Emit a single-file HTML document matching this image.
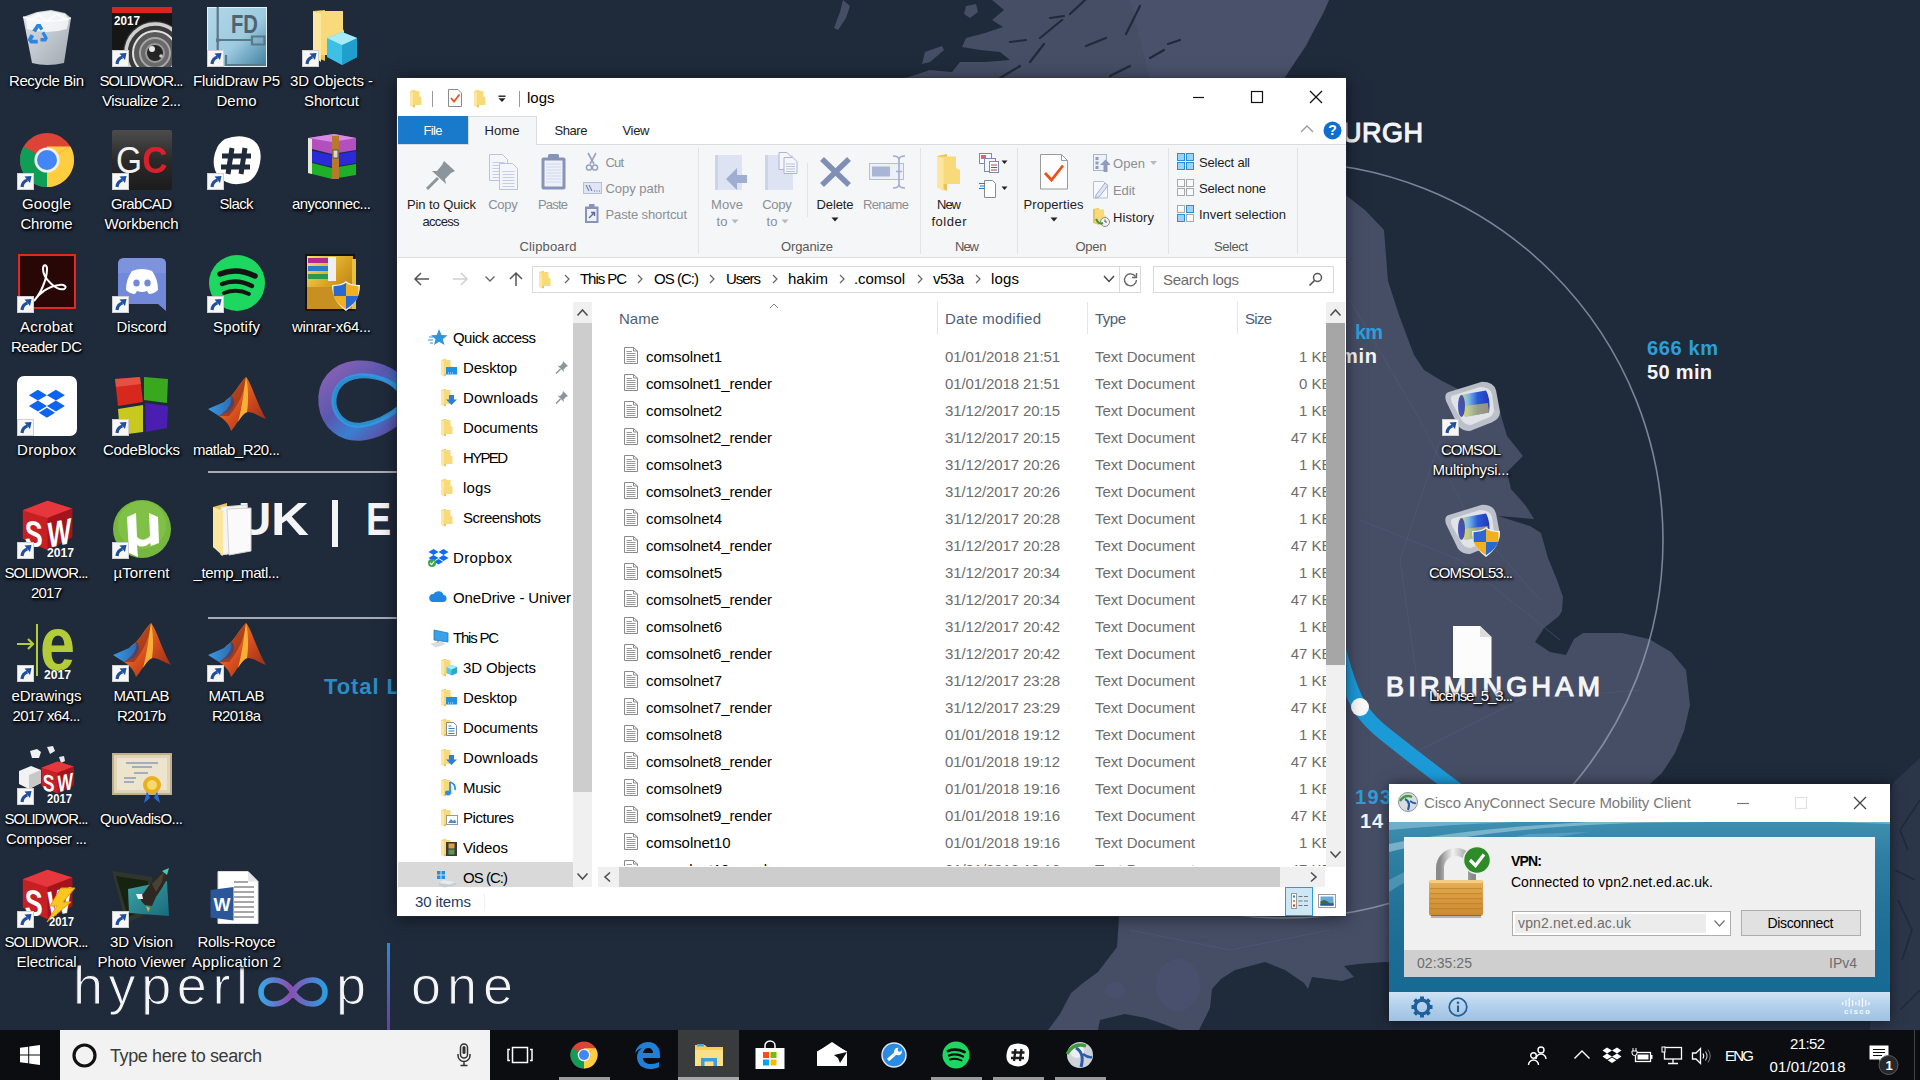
<!DOCTYPE html>
<html><head><meta charset="utf-8"><title>desktop</title><style>
html,body{margin:0;padding:0;}
body{width:1920px;height:1080px;overflow:hidden;position:relative;background:#1f2a3b;font-family:"Liberation Sans",sans-serif;}
.b{position:absolute;display:block;box-sizing:border-box;}
.t{position:absolute;white-space:pre;display:block;}
.lbl{text-shadow:1px 1px 2px #000,0 0 3px rgba(0,0,0,.9),1px 2px 3px rgba(0,0,0,.7);}
</style></head><body>
<svg class="b" style="left:0px;top:0px;" width="1920" height="1080" viewBox="0 0 1920 1080"><polygon points="992,0 1004,10 992,20 1003,27 985,33 966,38 962,47 980,50 1000,52 1010,60 985,62 960,62 952,72 930,70 912,76 896,80 1283,80 1295,62 1306,46 1314,30 1323,14 1329,0" fill="#464e66"/><polygon points="843,0 850,6 846,18 838,30 834,28 840,12" fill="#464e66"/><polygon points="925,52 942,46 944,50 930,62 922,64" fill="#464e66"/><polygon points="966,6 976,4 978,12 970,18 964,14" fill="#464e66"/><polygon points="1100,80 1340,80 1340,190 1347,196 1366,211 1384,230 1388,281 1399,315 1414,355 1424,370 1442,381 1476,398 1500,412 1507,436 1523,456 1507,472 1511,489 1526,506 1534,519 1498,516 1530,526 1541,533 1548,558 1557,580 1563,597 1562,611 1559,616 1544,628 1535,642 1550,652 1566,655 1574,639 1583,633 1622,633 1649,639 1671,652 1686,670 1690,705 1684,731 1675,753 1662,773 1651,783 1636,795 1620,830 1640,860 1660,900 1640,940 1600,960 1500,965 1385,962 1358,964 1344,966 1354,977 1342,981 1312,977 1308,989 1304,983 1285,970 1265,962 1235,970 1221,979 1212,989 1210,1008 1199,1030 1179,1030 1158,1022 1146,1018 1125,1014 1100,1020 1098,1030 1048,1030 1060,1014 1071,993 1083,983 1098,972 1117,947 1119,917 1100,900" fill="#464e66"/><polygon points="1920,758 1905,772 1894,782 1888,800 1880,830 1870,1030 1920,1030" fill="#2c3649"/><polygon points="1130,0 1329,0 1314,30 1295,62 1283,80 1150,80 1140,40" fill="#4b546d" opacity=".7"/><g stroke="#1f2a3b" stroke-width="2.2" fill="none" stroke-linecap="round"><path d="M1085,0 L1070,14 M1140,6 L1126,34 M1062,20 L1040,38 M1050,18 L1064,16 M1106,38 L1086,46 M1044,44 L1030,62 M1010,42 L1026,40 M1164,50 L1150,58 M1180,40 L1168,44 M1020,66 L1000,78 M1130,66 L1110,76"/></g><g stroke="#1f2a3b" stroke-width="1.6" fill="none"><path d="M1920,800 L1900,830 L1908,850 M1895,870 L1915,880 M1898,900 L1912,930 L1902,960 M1920,990 L1900,1010"/></g><g stroke="#525b74" stroke-width="1" fill="none" opacity=".6"><path d="M1350,300 L1420,420 L1470,520 L1540,600 M1360,520 L1460,560 L1560,640 M1400,760 L1520,700 L1640,690 M1440,440 L1400,560 L1420,700 M1130,930 L1230,950 L1330,930"/></g><g fill="#4a5270" opacity=".7"><ellipse cx="1178" cy="985" rx="22" ry="26"/><ellipse cx="1115" cy="990" rx="10" ry="8"/></g><circle cx="1285" cy="540" r="378" fill="none" stroke="#9aa3b5" stroke-opacity=".75" stroke-width="1.6"/><path d="M1336,638 C1342,664 1350,690 1360,708 C1368,720 1377,728 1386,735 L1414,757 L1444,780 L1540,852" fill="none" stroke="#1c9ad8" stroke-width="14.500" stroke-linejoin="round"/><circle cx="1360" cy="707" r="9" fill="#fbfbfb"/><rect x="208" y="471" width="190" height="2" fill="#c9ccd4" opacity=".8"/><rect x="208" y="617" width="190" height="2" fill="#c9ccd4" opacity=".8"/><defs><linearGradient id="rg" x1="0" y1="0" x2="1" y2="1"><stop offset="0" stop-color="#8a62b4"/><stop offset=".4" stop-color="#5a58b0"/><stop offset=".65" stop-color="#3a7fd0"/><stop offset="1" stop-color="#6a3f9a"/></linearGradient><linearGradient id="inf" x1="0" y1="0" x2="1" y2="0"><stop offset="0" stop-color="#3aa6e6"/><stop offset=".45" stop-color="#8a4fb0"/><stop offset="1" stop-color="#2f9be0"/></linearGradient><linearGradient id="vb" x1="0" y1="0" x2="0" y2="1"><stop offset="0" stop-color="#2b8bd6"/><stop offset="1" stop-color="#6a3fa0"/></linearGradient></defs><path d="M402,386 C390,373 373,367 357,368 C336,370 324,384 326,404 C328,423 343,435 362,433 C380,431 393,421 402,412" fill="none" stroke="url(#rg)" stroke-width="15"/><path d="M402,391 C390,380 374,375 359,376 C342,378 333,389 334,404 C336,418 348,427 362,425 C378,423 392,414 402,406" fill="none" stroke="#2f9fe6" stroke-width="5" opacity=".85"/><path d="M293,992 C283,975 261,977 261,992 C261,1007 283,1009 293,992 C303,975 325,977 325,992 C325,1007 303,1009 293,992 Z" fill="none" stroke="url(#inf)" stroke-width="5.500"/><rect x="387" y="943" width="3" height="87" fill="url(#vb)"/></svg>
<span class="t" style="left:1342.00px;top:117.00px;font-size:27px;line-height:32px;color:#f4f5f7;letter-spacing:0.501px;-webkit-text-stroke:1.1px #f4f5f7;">URGH</span>
<span class="t" style="left:1355.00px;top:320.00px;font-size:20px;line-height:24px;color:#2c9fdb;letter-spacing:-0.906px;font-weight:bold;">km</span>
<span class="t" style="left:1340.00px;top:344.00px;font-size:20px;line-height:24px;color:#f4f5f7;letter-spacing:0.722px;font-weight:bold;">min</span>
<span class="t" style="left:1647.00px;top:336.00px;font-size:20px;line-height:24px;color:#2c9fdb;letter-spacing:0.633px;font-weight:bold;">666 km</span>
<span class="t" style="left:1647.00px;top:360.00px;font-size:20px;line-height:24px;color:#f4f5f7;letter-spacing:0.328px;font-weight:bold;">50 min</span>
<span class="t" style="left:1386.00px;top:671.00px;font-size:27px;line-height:32px;color:#f4f5f7;letter-spacing:4.277px;-webkit-text-stroke:1.2px #f4f5f7;">BIRMINGHAM</span>
<span class="t" style="left:1355.00px;top:785.00px;font-size:20px;line-height:24px;color:#2c9fdb;letter-spacing:1.315px;font-weight:bold;">193</span>
<span class="t" style="left:1360.00px;top:809.00px;font-size:20px;line-height:24px;color:#f4f5f7;letter-spacing:0.753px;font-weight:bold;">14</span>
<span class="t" style="left:238.00px;top:491.90px;font-size:46px;line-height:55px;color:#f4f5f7;font-weight:bold;">U</span>
<span class="t" style="left:270.50px;top:491.90px;font-size:46px;line-height:55px;color:#f4f5f7;font-weight:bold;transform:scaleX(1.14);transform-origin:0 0;">K</span>
<div class="b" style="left:332px;top:499.5px;width:5.5px;height:47px;background:#f4f5f7;"></div>
<span class="t" style="left:365.50px;top:491.90px;font-size:46px;line-height:55px;color:#f4f5f7;font-weight:bold;transform:scaleX(.82);transform-origin:0 0;">E</span>
<span class="t" style="left:324.00px;top:674.00px;font-size:22px;line-height:26px;color:#2b8cc6;letter-spacing:0.922px;font-weight:bold;">Total L</span>
<span class="t" style="left:73.00px;top:952.50px;font-size:54px;line-height:65px;color:#f4f5f7;letter-spacing:5.583px;-webkit-text-stroke:1.1px #1f2a3b;">hyperl</span>
<span class="t" style="left:336.00px;top:952.50px;font-size:54px;line-height:65px;color:#f4f5f7;-webkit-text-stroke:1.1px #1f2a3b;">p</span>
<span class="t" style="left:411.00px;top:952.50px;font-size:54px;line-height:65px;color:#f4f5f7;letter-spacing:5.950px;-webkit-text-stroke:1.1px #1f2a3b;">one</span>
<svg class="b" style="left:17px;top:7px;" width="60" height="60" viewBox="0 0 60 60"><defs><linearGradient id="rb1" x1="0" y1="0" x2="1" y2="1"><stop offset="0" stop-color="#f4f6f8"/><stop offset=".5" stop-color="#cfd5db"/><stop offset="1" stop-color="#aab2ba"/></linearGradient></defs><path d="M6,10 L20,5 L34,3 L48,6 L54,11 L47,56 Q30,60 15,56 Z" fill="url(#rb1)" opacity=".92"/><path d="M6,10 Q30,18 54,11" fill="none" stroke="#fff" stroke-width="1.500" opacity=".8"/><path d="M12,14 L22,8 L30,14 L40,7 L50,13" fill="none" stroke="#fff" stroke-width="2" opacity=".7"/><path d="M9,11 L20,6 L34,4 L48,7 L52,12 L50,22 Q30,28 10,22 Z" fill="#fff" opacity=".75"/><g fill="#2a86e0" transform="translate(-5,-5) scale(.92)"><path d="M22,31 L27,24 L31,24 L34,29 L31,31 L29,28 L26,33 Z"/><path d="M35,32 L39,39 L37,43 L31,43 L31,39 L35,39 L32,34 Z"/><path d="M28,45 L20,45 L17,41 L20,35 L24,37 L22,41 L28,41 Z"/></g></svg>
<span class="t lbl" style="left:9.00px;top:71.90px;font-size:15px;line-height:18px;color:#fff;letter-spacing:-0.420px;">Recycle Bin</span>
<svg class="b" style="left:112px;top:7px;" width="60" height="60" viewBox="0 0 60 60"><rect width="60" height="60" fill="#161616"/><rect width="60" height="6" fill="#d8251f"/><circle cx="43" cy="46" r="32" fill="#3a3a3a"/><circle cx="43" cy="46" r="29" fill="none" stroke="#d0d0d0" stroke-width="3.500"/><circle cx="43" cy="46" r="22" fill="#5a5a5a" stroke="#e0e0e0" stroke-width="2"/><circle cx="43" cy="46" r="15" fill="#6a6a6a" stroke="#a8a8a8" stroke-width="2"/><circle cx="43" cy="46" r="9" fill="#242424" stroke="#9a9a9a" stroke-width="2"/><circle cx="40" cy="42" r="3" fill="#e8e8e8"/><circle cx="49" cy="49" r="1.800" fill="#c8c8c8"/><text x="2" y="17.500" font-family="Liberation Sans" font-weight="bold" font-size="12.5" fill="#fff" textLength="26" lengthAdjust="spacingAndGlyphs">2017</text><g transform="translate(0,43)"><rect x="0.500" y="0.500" width="16" height="16" fill="#f7f7f7" stroke="#d0d0d0"/><path d="M5,14 Q5.500,8.500 10.500,7" stroke="#1f4f9e" stroke-width="3.200" fill="none"/><path d="M7.500,3.500 L14.500,3 L13,10 Z" fill="#1f4f9e"/></g></svg>
<span class="t lbl" style="left:99.50px;top:71.90px;font-size:15px;line-height:18px;color:#fff;letter-spacing:-1.017px;">SOLIDWOR...</span>
<span class="t lbl" style="left:102.00px;top:92.10px;font-size:15px;line-height:18px;color:#fff;letter-spacing:-0.444px;">Visualize 2...</span>
<svg class="b" style="left:207px;top:7px;" width="60" height="60" viewBox="0 0 60 60"><defs><linearGradient id="fd3" x1="0" y1="0" x2="1" y2="1"><stop offset="0" stop-color="#b4d6e8"/><stop offset=".55" stop-color="#9ccbe0"/><stop offset="1" stop-color="#3f7f9f"/></linearGradient></defs><rect x="0.500" y="0.500" width="59" height="59" fill="url(#fd3)" stroke="#e8f0f4"/><path d="M10.700,0 V60 M10.700,33 H45 M45,29.500 h12.500 v8 h-12.500 Z M19,48 v10 h38" fill="none" stroke="#5a7888" stroke-width="2.200"/><rect x="9" y="31.500" width="3.500" height="3.500" fill="#5a7888"/><text x="24" y="26.300" font-family="Liberation Sans" font-weight="bold" font-size="26" fill="#4f6270" textLength="27" lengthAdjust="spacingAndGlyphs">FD</text><g transform="translate(0,43)"><rect x="0.500" y="0.500" width="16" height="16" fill="#f7f7f7" stroke="#d0d0d0"/><path d="M5,14 Q5.500,8.500 10.500,7" stroke="#1f4f9e" stroke-width="3.200" fill="none"/><path d="M7.500,3.500 L14.500,3 L13,10 Z" fill="#1f4f9e"/></g></svg>
<span class="t lbl" style="left:193.00px;top:71.90px;font-size:15px;line-height:18px;color:#fff;letter-spacing:-0.276px;">FluidDraw P5</span>
<span class="t lbl" style="left:216.50px;top:92.10px;font-size:15px;line-height:18px;color:#fff;letter-spacing:-0.005px;">Demo</span>
<svg class="b" style="left:302px;top:7px;" width="60" height="60" viewBox="0 0 60 60"><path d="M11,4 L23,3 L23,54 L11,49 Z" fill="#e9c558"/><path d="M15,4 L41,4 L41,22 L42,24 L42,48 L15,48 Z" fill="#f9da7a"/><path d="M11,4 L19,7 L19,55 L11,49 Z" fill="#fde7a0"/><path d="M40,25 L55,31 L55,50 L40,58 L25,50 L25,31 Z" fill="#3ec0e6"/><path d="M40,38 L55,31 L55,50 L40,58 Z" fill="#1fa0cc"/><path d="M40,38 L25,31 L40,25 L55,31 Z" fill="#a6ecf8"/><g transform="translate(0,43)"><rect x="0.500" y="0.500" width="16" height="16" fill="#f7f7f7" stroke="#d0d0d0"/><path d="M5,14 Q5.500,8.500 10.500,7" stroke="#1f4f9e" stroke-width="3.200" fill="none"/><path d="M7.500,3.500 L14.500,3 L13,10 Z" fill="#1f4f9e"/></g></svg>
<span class="t lbl" style="left:290.00px;top:71.90px;font-size:15px;line-height:18px;color:#fff;letter-spacing:-0.033px;">3D Objects -</span>
<span class="t lbl" style="left:304.00px;top:92.10px;font-size:15px;line-height:18px;color:#fff;letter-spacing:-0.123px;">Shortcut</span>
<svg class="b" style="left:17px;top:130px;" width="60" height="60" viewBox="0 0 60 60"><g transform="translate(2,2) scale(2)"><circle cx="14" cy="14" r="13.500" fill="#db4437"/><path d="M14,14 L2.300,20.750 A13.500,13.500 0 0 0 14,27.500 L20.750,15.800 Z" fill="#0f9d58"/><path d="M14,14 L2.300,20.750 A13.500,13.500 0 0 1 2.300,7.250 Z" fill="#0f9d58"/><path d="M14,14 L25.700,7.250 A13.500,13.500 0 0 1 14,27.500 Z" fill="#ffcd40"/><path d="M14,14 L25.700,7.250 H14 Z" fill="#ffcd40"/><circle cx="14" cy="14" r="6.300" fill="#f1f1f1"/><circle cx="14" cy="14" r="5" fill="#4285f4"/></g><g transform="translate(0,43)"><rect x="0.500" y="0.500" width="16" height="16" fill="#f7f7f7" stroke="#d0d0d0"/><path d="M5,14 Q5.500,8.500 10.500,7" stroke="#1f4f9e" stroke-width="3.200" fill="none"/><path d="M7.500,3.500 L14.500,3 L13,10 Z" fill="#1f4f9e"/></g></svg>
<span class="t lbl" style="left:22.00px;top:194.90px;font-size:15px;line-height:18px;color:#fff;letter-spacing:0.126px;">Google</span>
<span class="t lbl" style="left:20.50px;top:215.10px;font-size:15px;line-height:18px;color:#fff;letter-spacing:-0.270px;">Chrome</span>
<svg class="b" style="left:112px;top:130px;" width="60" height="60" viewBox="0 0 60 60"><defs><linearGradient id="gcg6" x1="0" y1="0" x2="0" y2="1"><stop offset="0" stop-color="#4c4c4c"/><stop offset=".5" stop-color="#2a2a2a"/><stop offset="1" stop-color="#1c1c1c"/></linearGradient></defs><rect width="60" height="60" rx="2" fill="url(#gcg6)"/><text x="4" y="43" font-family="Liberation Sans" font-size="36" fill="#f2f2f2" textLength="26" lengthAdjust="spacingAndGlyphs">G</text><text x="30" y="43" font-family="Liberation Sans" font-weight="bold" font-size="36" fill="#d8212a" textLength="25" lengthAdjust="spacingAndGlyphs">C</text><g transform="translate(0,43)"><rect x="0.500" y="0.500" width="16" height="16" fill="#f7f7f7" stroke="#d0d0d0"/><path d="M5,14 Q5.500,8.500 10.500,7" stroke="#1f4f9e" stroke-width="3.200" fill="none"/><path d="M7.500,3.500 L14.500,3 L13,10 Z" fill="#1f4f9e"/></g></svg>
<span class="t lbl" style="left:111.00px;top:194.90px;font-size:15px;line-height:18px;color:#fff;letter-spacing:-0.670px;">GrabCAD</span>
<span class="t lbl" style="left:104.50px;top:215.10px;font-size:15px;line-height:18px;color:#fff;letter-spacing:-0.199px;">Workbench</span>
<svg class="b" style="left:207px;top:130px;" width="60" height="60" viewBox="0 0 60 60"><g transform="translate(0,3)"><path d="M18,6 Q34,0 46,7 Q56,14 53,30 Q50,46 38,50 Q22,54 12,44 Q4,34 8,20 Q11,10 18,6 Z" fill="#fff"/><path d="M25,15 L21,41 M38,15 L34,41 M15,23 L44,23 M14,34 L43,34" stroke="#1f2a3b" stroke-width="5"/></g><g transform="translate(0,43)"><rect x="0.500" y="0.500" width="16" height="16" fill="#f7f7f7" stroke="#d0d0d0"/><path d="M5,14 Q5.500,8.500 10.500,7" stroke="#1f4f9e" stroke-width="3.200" fill="none"/><path d="M7.500,3.500 L14.500,3 L13,10 Z" fill="#1f4f9e"/></g></svg>
<span class="t lbl" style="left:219.50px;top:194.90px;font-size:15px;line-height:18px;color:#fff;letter-spacing:-0.670px;">Slack</span>
<svg class="b" style="left:302px;top:130px;" width="60" height="60" viewBox="0 0 60 60"><g><path d="M6,8 L32,4 L54,8 L54,20 L30,24 L6,18 Z" fill="#b44fc0"/><path d="M6,8 L32,4 L54,8 L30,12 Z" fill="#d88ae0"/><path d="M6,20 L30,25 L54,21 L54,33 L30,37 L6,31 Z" fill="#2a2ad8"/><path d="M6,32 L30,38 L54,34 L54,45 L30,49 L6,43 Z" fill="#1fb02a"/><path d="M6,8 L10,9 L10,44 L6,43 Z" fill="#e8e8d8"/><rect x="30" y="6" width="7" height="43" fill="#b87a2a"/><rect x="31" y="20" width="5" height="8" fill="#d8d8d8" stroke="#555"/></g></svg>
<span class="t lbl" style="left:292.00px;top:194.90px;font-size:15px;line-height:18px;color:#fff;letter-spacing:-0.551px;">anyconnec...</span>
<svg class="b" style="left:17px;top:253px;" width="60" height="60" viewBox="0 0 60 60"><rect x="2" y="2" width="56" height="53" fill="#2a0707" stroke="#e5281e" stroke-width="2"/><path d="M17,48 C24,40 30,26 30,16 C30,11 26,11 26,16 C26,26 40,38 47,36 C51,34 47,31 42,32 C32,33 22,40 17,48 Z" fill="none" stroke="#fff" stroke-width="2"/><g transform="translate(0,43)"><rect x="0.500" y="0.500" width="16" height="16" fill="#f7f7f7" stroke="#d0d0d0"/><path d="M5,14 Q5.500,8.500 10.500,7" stroke="#1f4f9e" stroke-width="3.200" fill="none"/><path d="M7.500,3.500 L14.500,3 L13,10 Z" fill="#1f4f9e"/></g></svg>
<span class="t lbl" style="left:20.00px;top:317.90px;font-size:15px;line-height:18px;color:#fff;letter-spacing:0.217px;">Acrobat</span>
<span class="t lbl" style="left:11.00px;top:338.10px;font-size:15px;line-height:18px;color:#fff;letter-spacing:-0.504px;">Reader DC</span>
<svg class="b" style="left:112px;top:253px;" width="60" height="60" viewBox="0 0 60 60"><path d="M12,5 H48 Q54,5 54,11 V58 L46,51 H12 Q6,51 6,45 V11 Q6,5 12,5 Z" fill="#7289da"/><path d="M6,11 Q6,5 12,5 H48 Q54,5 54,11 V20 H6 Z" fill="#8a9de2" opacity=".5"/><path d="M20,18 Q30,14 40,18 Q46,26 46,37 Q42,41 37,41 L35,38 Q32,39 30,39 Q28,39 25,38 L23,41 Q18,41 14,37 Q14,26 20,18 Z" fill="#fff"/><ellipse cx="24.500" cy="30" rx="3.200" ry="3.600" fill="#7289da"/><ellipse cx="35.500" cy="30" rx="3.200" ry="3.600" fill="#7289da"/><g transform="translate(0,43)"><rect x="0.500" y="0.500" width="16" height="16" fill="#f7f7f7" stroke="#d0d0d0"/><path d="M5,14 Q5.500,8.500 10.500,7" stroke="#1f4f9e" stroke-width="3.200" fill="none"/><path d="M7.500,3.500 L14.500,3 L13,10 Z" fill="#1f4f9e"/></g></svg>
<span class="t lbl" style="left:116.50px;top:317.90px;font-size:15px;line-height:18px;color:#fff;letter-spacing:-0.141px;">Discord</span>
<svg class="b" style="left:207px;top:253px;" width="60" height="60" viewBox="0 0 60 60"><circle cx="30" cy="30" r="28" fill="#1ed760"/><path d="M13,21 Q30,14 48,23" fill="none" stroke="#141414" stroke-width="5.500" stroke-linecap="round"/><path d="M15,31 Q30,25 45,33" fill="none" stroke="#141414" stroke-width="4.500" stroke-linecap="round"/><path d="M17,40 Q30,35 42,41" fill="none" stroke="#141414" stroke-width="3.800" stroke-linecap="round"/><g transform="translate(0,43)"><rect x="0.500" y="0.500" width="16" height="16" fill="#f7f7f7" stroke="#d0d0d0"/><path d="M5,14 Q5.500,8.500 10.500,7" stroke="#1f4f9e" stroke-width="3.200" fill="none"/><path d="M7.500,3.500 L14.500,3 L13,10 Z" fill="#1f4f9e"/></g></svg>
<span class="t lbl" style="left:213.00px;top:317.90px;font-size:15px;line-height:18px;color:#fff;letter-spacing:0.190px;">Spotify</span>
<svg class="b" style="left:302px;top:253px;" width="60" height="60" viewBox="0 0 60 60"><defs><linearGradient id="gold12" x1="0" y1="0" x2="1" y2="1"><stop offset="0" stop-color="#f8e060"/><stop offset=".5" stop-color="#d8a020"/><stop offset="1" stop-color="#a87010"/></linearGradient></defs><rect x="3" y="1" width="50" height="57" fill="#141414"/><rect x="5" y="3" width="46" height="53" fill="url(#gold12)"/><rect x="5" y="34" width="46" height="22" fill="#c89020" /><rect x="6" y="5" width="20" height="5" fill="#b02a90"/><rect x="6" y="13" width="20" height="5" fill="#2a7ad0"/><rect x="6" y="21" width="20" height="5" fill="#2a9a4a"/><rect x="26" y="4" width="8" height="24" fill="#f0f0f0"/><rect x="50" y="6" width="4" height="50" fill="#e8c040"/><g transform="translate(30,28) scale(1.0)"><path d="M0,4 Q10,4 14,0 Q18,4 28,4 Q28,20 14,30 Q0,20 0,4 Z" fill="#f0f0f0"/><path d="M1.500,5.200 Q10,5 14,1.800 V15 H1.800 Q1.500,10 1.500,5.200 Z" fill="#2a6ad0"/><path d="M26.500,5.200 Q18,5 14,1.800 V15 H26.200 Q26.500,10 26.500,5.200 Z" fill="#f0b020"/><path d="M1.800,15 H14 V28.300 Q4,22 1.800,15 Z" fill="#f0b020"/><path d="M26.200,15 H14 V28.300 Q24,22 26.200,15 Z" fill="#2a6ad0"/></g></svg>
<span class="t lbl" style="left:292.00px;top:317.90px;font-size:15px;line-height:18px;color:#fff;letter-spacing:-0.294px;">winrar-x64...</span>
<svg class="b" style="left:17px;top:376px;" width="60" height="60" viewBox="0 0 60 60"><rect width="60" height="60" rx="7" fill="#fff"/><g transform="translate(11,12) scale(1.8)"><path d="M5.500,1 L10.500,4 L5.500,7 L0.500,4 Z M15.500,1 L20.500,4 L15.500,7 L10.500,4 Z M5.500,7 L10.500,10 L5.500,13 L0.500,10 Z M15.500,7 L20.500,10 L15.500,13 L10.500,10 Z M10.500,11 L15,13.800 L10.500,16.500 L6,13.800 Z" fill="#0d63f2"/></g><g transform="translate(0,43)"><rect x="0.500" y="0.500" width="16" height="16" fill="#f7f7f7" stroke="#d0d0d0"/><path d="M5,14 Q5.500,8.500 10.500,7" stroke="#1f4f9e" stroke-width="3.200" fill="none"/><path d="M7.500,3.500 L14.500,3 L13,10 Z" fill="#1f4f9e"/></g></svg>
<span class="t lbl" style="left:17.00px;top:440.90px;font-size:15px;line-height:18px;color:#fff;letter-spacing:0.384px;">Dropbox</span>
<svg class="b" style="left:112px;top:376px;" width="60" height="60" viewBox="0 0 60 60"><path d="M3,3 L28,1 L31,26 L6,30 Z" fill="#d8281e"/><path d="M3,3 L28,1 L29,8 L4,11 Z" fill="#f06a5a" opacity=".6"/><path d="M32,1 L56,3 L55,27 L32,24 Z" fill="#3aa81e"/><path d="M6,33 L31,29 L31,56 L8,59 Z" fill="#c8c81e"/><path d="M33,27 L56,30 L55,52 L34,56 Z" fill="#4a1eb0"/><g transform="translate(0,43)"><rect x="0.500" y="0.500" width="16" height="16" fill="#f7f7f7" stroke="#d0d0d0"/><path d="M5,14 Q5.500,8.500 10.500,7" stroke="#1f4f9e" stroke-width="3.200" fill="none"/><path d="M7.500,3.500 L14.500,3 L13,10 Z" fill="#1f4f9e"/></g></svg>
<span class="t lbl" style="left:103.00px;top:440.90px;font-size:15px;line-height:18px;color:#fff;letter-spacing:-0.338px;">CodeBlocks</span>
<svg class="b" style="left:207px;top:376px;" width="60" height="60" viewBox="0 0 60 60"><defs><linearGradient id="mlo15" x1="0" y1="0" x2="1" y2="1"><stop offset="0" stop-color="#f7a12a"/><stop offset=".5" stop-color="#d8501e"/><stop offset="1" stop-color="#8a2414"/></linearGradient><linearGradient id="mlb15" x1="0" y1="0" x2="1" y2="0"><stop offset="0" stop-color="#3a9ae0"/><stop offset="1" stop-color="#2a5aa0"/></linearGradient></defs><path d="M1,33 L17,26 L24,20 L33,30 L22,40 L12,40 Z" fill="url(#mlb15)"/><path d="M17,26 C27,20 33,6 39,1 C44,6 50,28 59,43 C52,40 46,36 41,36 C34,38 29,50 24,55 C22,48 18,44 12,40 L22,36 C26,32 30,24 24,20 Z" fill="url(#mlo15)"/><path d="M24,20 C30,14 34,6 39,1 C38,12 34,26 22,40 L12,40 C20,34 26,28 24,20 Z" fill="#7a1a14" opacity=".5"/><path d="M39,1 C41,10 42,24 40,36 C37,37 34,41 31,46 C35,32 37,14 39,1 Z" fill="#fbc23a" opacity=".85"/></svg>
<span class="t lbl" style="left:193.00px;top:440.90px;font-size:15px;line-height:18px;color:#fff;letter-spacing:-0.532px;">matlab_R20...</span>
<svg class="b" style="left:17px;top:499px;" width="60" height="60" viewBox="0 0 60 60"><g transform="translate(2,-2) scale(0.95)"><path d="M4,14 L30,4 L56,12 L56,42 L30,56 L4,44 Z" fill="#c81f25"/><path d="M4,14 L30,4 L56,12 L30,22 Z" fill="#e6383c"/><path d="M30,22 L56,12 L56,42 L30,56 Z" fill="#a3151b"/><text x="6" y="50" font-family="Liberation Sans" font-weight="bold" font-size="38" fill="#fff" transform="skewY(8)" textLength="19" lengthAdjust="spacingAndGlyphs">S</text><text x="30" y="60" font-family="Liberation Sans" font-weight="bold" font-size="38" fill="#fff" transform="skewY(-12)" textLength="25" lengthAdjust="spacingAndGlyphs">W</text></g><text x="30" y="58" font-family="Liberation Sans" font-weight="bold" font-size="13" fill="#fff" stroke="#1a1a1a" stroke-width=".5" paint-order="stroke" textLength="27" lengthAdjust="spacingAndGlyphs">2017</text><g transform="translate(0,43)"><rect x="0.500" y="0.500" width="16" height="16" fill="#f7f7f7" stroke="#d0d0d0"/><path d="M5,14 Q5.500,8.500 10.500,7" stroke="#1f4f9e" stroke-width="3.200" fill="none"/><path d="M7.500,3.500 L14.500,3 L13,10 Z" fill="#1f4f9e"/></g></svg>
<span class="t lbl" style="left:4.50px;top:563.90px;font-size:15px;line-height:18px;color:#fff;letter-spacing:-1.017px;">SOLIDWOR...</span>
<span class="t lbl" style="left:31.00px;top:584.10px;font-size:15px;line-height:18px;color:#fff;letter-spacing:-0.790px;">2017</span>
<svg class="b" style="left:112px;top:499px;" width="60" height="60" viewBox="0 0 60 60"><circle cx="30" cy="30" r="29" fill="#76b83f"/><circle cx="30" cy="26" r="24" fill="#8cc850" opacity=".5"/><path d="M15,18 L24,14 L25,38 Q31,44 38,37 L37,14 L46,18 L47,44 L39,47 L38,44 Q31,50 25,46 L26,58 L17,54 Z" fill="#fff"/><g transform="translate(0,43)"><rect x="0.500" y="0.500" width="16" height="16" fill="#f7f7f7" stroke="#d0d0d0"/><path d="M5,14 Q5.500,8.500 10.500,7" stroke="#1f4f9e" stroke-width="3.200" fill="none"/><path d="M7.500,3.500 L14.500,3 L13,10 Z" fill="#1f4f9e"/></g></svg>
<span class="t lbl" style="left:113.50px;top:563.90px;font-size:15px;line-height:18px;color:#fff;letter-spacing:0.096px;">µTorrent</span>
<svg class="b" style="left:207px;top:499px;" width="60" height="60" viewBox="0 0 60 60"><path d="M6,8 L20,4 L20,56 L6,48 Z" fill="#e9c558"/><path d="M14,8 L40,6 L40,52 L14,56 Z" fill="#f4f4f4" stroke="#d8d8d8"/><path d="M20,10 L44,9 L44,52 L22,56 Z" fill="#fafafa" stroke="#d0d0d0"/><path d="M6,8 L16,12 L16,57 L6,48 Z" fill="#fde7a0"/></svg>
<span class="t lbl" style="left:193.50px;top:563.90px;font-size:15px;line-height:18px;color:#fff;letter-spacing:-0.406px;">_temp_matl...</span>
<svg class="b" style="left:17px;top:622px;" width="60" height="60" viewBox="0 0 60 60"><text x="23" y="48" font-family="Liberation Sans" font-weight="bold" font-size="76" fill="#b4cc3a" textLength="35" lengthAdjust="spacingAndGlyphs">e</text><rect x="19" y="2" width="2" height="52" fill="#b4cc3a"/><path d="M0,22 H16 M11,17 L16,22 L11,27" fill="none" stroke="#b4cc3a" stroke-width="2.200"/><text x="27" y="57" font-family="Liberation Sans" font-weight="bold" font-size="13" fill="#fff" stroke="#1a1a1a" stroke-width=".5" paint-order="stroke" textLength="27" lengthAdjust="spacingAndGlyphs">2017</text><g transform="translate(0,43)"><rect x="0.500" y="0.500" width="16" height="16" fill="#f7f7f7" stroke="#d0d0d0"/><path d="M5,14 Q5.500,8.500 10.500,7" stroke="#1f4f9e" stroke-width="3.200" fill="none"/><path d="M7.500,3.500 L14.500,3 L13,10 Z" fill="#1f4f9e"/></g></svg>
<span class="t lbl" style="left:11.50px;top:686.90px;font-size:15px;line-height:18px;color:#fff;letter-spacing:-0.108px;">eDrawings</span>
<span class="t lbl" style="left:12.50px;top:707.10px;font-size:15px;line-height:18px;color:#fff;letter-spacing:-0.622px;">2017 x64...</span>
<svg class="b" style="left:112px;top:622px;" width="60" height="60" viewBox="0 0 60 60"><defs><linearGradient id="mlo20" x1="0" y1="0" x2="1" y2="1"><stop offset="0" stop-color="#f7a12a"/><stop offset=".5" stop-color="#d8501e"/><stop offset="1" stop-color="#8a2414"/></linearGradient><linearGradient id="mlb20" x1="0" y1="0" x2="1" y2="0"><stop offset="0" stop-color="#3a9ae0"/><stop offset="1" stop-color="#2a5aa0"/></linearGradient></defs><path d="M1,33 L17,26 L24,20 L33,30 L22,40 L12,40 Z" fill="url(#mlb20)"/><path d="M17,26 C27,20 33,6 39,1 C44,6 50,28 59,43 C52,40 46,36 41,36 C34,38 29,50 24,55 C22,48 18,44 12,40 L22,36 C26,32 30,24 24,20 Z" fill="url(#mlo20)"/><path d="M24,20 C30,14 34,6 39,1 C38,12 34,26 22,40 L12,40 C20,34 26,28 24,20 Z" fill="#7a1a14" opacity=".5"/><path d="M39,1 C41,10 42,24 40,36 C37,37 34,41 31,46 C35,32 37,14 39,1 Z" fill="#fbc23a" opacity=".85"/><g transform="translate(0,43)"><rect x="0.500" y="0.500" width="16" height="16" fill="#f7f7f7" stroke="#d0d0d0"/><path d="M5,14 Q5.500,8.500 10.500,7" stroke="#1f4f9e" stroke-width="3.200" fill="none"/><path d="M7.500,3.500 L14.500,3 L13,10 Z" fill="#1f4f9e"/></g></svg>
<span class="t lbl" style="left:113.50px;top:686.90px;font-size:15px;line-height:18px;color:#fff;letter-spacing:-0.581px;">MATLAB</span>
<span class="t lbl" style="left:117.00px;top:707.10px;font-size:15px;line-height:18px;color:#fff;letter-spacing:-0.709px;">R2017b</span>
<svg class="b" style="left:207px;top:622px;" width="60" height="60" viewBox="0 0 60 60"><defs><linearGradient id="mlo21" x1="0" y1="0" x2="1" y2="1"><stop offset="0" stop-color="#f7a12a"/><stop offset=".5" stop-color="#d8501e"/><stop offset="1" stop-color="#8a2414"/></linearGradient><linearGradient id="mlb21" x1="0" y1="0" x2="1" y2="0"><stop offset="0" stop-color="#3a9ae0"/><stop offset="1" stop-color="#2a5aa0"/></linearGradient></defs><path d="M1,33 L17,26 L24,20 L33,30 L22,40 L12,40 Z" fill="url(#mlb21)"/><path d="M17,26 C27,20 33,6 39,1 C44,6 50,28 59,43 C52,40 46,36 41,36 C34,38 29,50 24,55 C22,48 18,44 12,40 L22,36 C26,32 30,24 24,20 Z" fill="url(#mlo21)"/><path d="M24,20 C30,14 34,6 39,1 C38,12 34,26 22,40 L12,40 C20,34 26,28 24,20 Z" fill="#7a1a14" opacity=".5"/><path d="M39,1 C41,10 42,24 40,36 C37,37 34,41 31,46 C35,32 37,14 39,1 Z" fill="#fbc23a" opacity=".85"/><g transform="translate(0,43)"><rect x="0.500" y="0.500" width="16" height="16" fill="#f7f7f7" stroke="#d0d0d0"/><path d="M5,14 Q5.500,8.500 10.500,7" stroke="#1f4f9e" stroke-width="3.200" fill="none"/><path d="M7.500,3.500 L14.500,3 L13,10 Z" fill="#1f4f9e"/></g></svg>
<span class="t lbl" style="left:208.50px;top:686.90px;font-size:15px;line-height:18px;color:#fff;letter-spacing:-0.581px;">MATLAB</span>
<span class="t lbl" style="left:212.00px;top:707.10px;font-size:15px;line-height:18px;color:#fff;letter-spacing:-0.709px;">R2018a</span>
<svg class="b" style="left:17px;top:745px;" width="60" height="60" viewBox="0 0 60 60"><path d="M2,26 L14,21 L24,25 L24,38 L12,44 L2,39 Z" fill="#f2f2f2"/><path d="M12,30 L24,25 L24,38 L12,44 Z" fill="#c8c8c8"/><path d="M13,6 L20,4 L24,7 L22,13 L15,13 Z" fill="#f2f2f2"/><path d="M30,2 L36,1 L38,6 L33,9 Z" fill="#ececec"/><path d="M42,12 L47,11 L48,16 L44,18 Z" fill="#e8e8e8"/><g transform="translate(22,14) scale(0.62)"><path d="M4,14 L30,4 L56,12 L56,42 L30,56 L4,44 Z" fill="#c81f25"/><path d="M4,14 L30,4 L56,12 L30,22 Z" fill="#e6383c"/><path d="M30,22 L56,12 L56,42 L30,56 Z" fill="#a3151b"/><text x="6" y="50" font-family="Liberation Sans" font-weight="bold" font-size="38" fill="#fff" transform="skewY(8)" textLength="19" lengthAdjust="spacingAndGlyphs">S</text><text x="30" y="60" font-family="Liberation Sans" font-weight="bold" font-size="38" fill="#fff" transform="skewY(-12)" textLength="25" lengthAdjust="spacingAndGlyphs">W</text></g><text x="30" y="58" font-family="Liberation Sans" font-weight="bold" font-size="12" fill="#fff" stroke="#1a1a1a" stroke-width=".5" paint-order="stroke" textLength="25" lengthAdjust="spacingAndGlyphs">2017</text><g transform="translate(0,43)"><rect x="0.500" y="0.500" width="16" height="16" fill="#f7f7f7" stroke="#d0d0d0"/><path d="M5,14 Q5.500,8.500 10.500,7" stroke="#1f4f9e" stroke-width="3.200" fill="none"/><path d="M7.500,3.500 L14.500,3 L13,10 Z" fill="#1f4f9e"/></g></svg>
<span class="t lbl" style="left:4.50px;top:809.90px;font-size:15px;line-height:18px;color:#fff;letter-spacing:-1.017px;">SOLIDWOR...</span>
<span class="t lbl" style="left:6.00px;top:830.10px;font-size:15px;line-height:18px;color:#fff;letter-spacing:-0.442px;">Composer ...</span>
<svg class="b" style="left:112px;top:745px;" width="60" height="60" viewBox="0 0 60 60"><g transform="translate(0,2)"><rect x="1" y="7" width="58" height="40" fill="#e0d4b8" stroke="#c0b088" stroke-width="2"/><rect x="5" y="11" width="50" height="32" fill="#ece4cc"/><path d="M14,16 h32 M20,20 h20 M22,26 h14 M12,31 h12 M12,35 h10" stroke="#8a9ab8" stroke-width="1.400"/><path d="M35,44 L32,56 L38,51 Z M45,44 L48,56 L42,51 Z" fill="#2a6ad8"/><circle cx="40" cy="38" r="9" fill="#e8b020"/><circle cx="40" cy="38" r="5" fill="#f8d868"/></g></svg>
<span class="t lbl" style="left:100.00px;top:809.90px;font-size:15px;line-height:18px;color:#fff;letter-spacing:-0.539px;">QuoVadisO...</span>
<svg class="b" style="left:17px;top:868px;" width="60" height="60" viewBox="0 0 60 60"><g transform="translate(2,-2) scale(0.95)"><path d="M4,14 L30,4 L56,12 L56,42 L30,56 L4,44 Z" fill="#c81f25"/><path d="M4,14 L30,4 L56,12 L30,22 Z" fill="#e6383c"/><path d="M30,22 L56,12 L56,42 L30,56 Z" fill="#a3151b"/><text x="6" y="50" font-family="Liberation Sans" font-weight="bold" font-size="38" fill="#fff" transform="skewY(8)" textLength="19" lengthAdjust="spacingAndGlyphs">S</text><text x="30" y="60" font-family="Liberation Sans" font-weight="bold" font-size="38" fill="#fff" transform="skewY(-12)" textLength="25" lengthAdjust="spacingAndGlyphs">W</text></g><path d="M44,20 L58,20 L46,34 L54,34 L30,54 L40,38 L33,38 Z" fill="#f8c820" stroke="#e89a10" stroke-width="1"/><text x="32" y="58" font-family="Liberation Sans" font-weight="bold" font-size="12" fill="#fff" stroke="#1a1a1a" stroke-width=".5" paint-order="stroke" textLength="25" lengthAdjust="spacingAndGlyphs">2017</text><g transform="translate(0,43)"><rect x="0.500" y="0.500" width="16" height="16" fill="#f7f7f7" stroke="#d0d0d0"/><path d="M5,14 Q5.500,8.500 10.500,7" stroke="#1f4f9e" stroke-width="3.200" fill="none"/><path d="M7.500,3.500 L14.500,3 L13,10 Z" fill="#1f4f9e"/></g></svg>
<span class="t lbl" style="left:4.50px;top:932.90px;font-size:15px;line-height:18px;color:#fff;letter-spacing:-1.017px;">SOLIDWOR...</span>
<span class="t lbl" style="left:16.50px;top:953.10px;font-size:15px;line-height:18px;color:#fff;letter-spacing:-0.095px;">Electrical</span>
<svg class="b" style="left:112px;top:868px;" width="60" height="60" viewBox="0 0 60 60"><defs><linearGradient id="vis25" x1="0" y1="0" x2="1" y2="1"><stop offset="0" stop-color="#3fa6a6"/><stop offset="1" stop-color="#186a7c"/></linearGradient></defs><path d="M0,3 L40,9 L40,44 L14,55 Z" fill="#30362e"/><path d="M4,8 L36,13 L36,41 L16,49 Z" fill="#16240f"/><path d="M16,21 L55,13 L57,48 L17,45 Z" fill="url(#vis25)"/><path d="M28,30 L38,16 L48,5 L57,0 L56,9 L50,20 L44,29 L40,38 L33,37 L30,34 Z" fill="#2e2820"/><path d="M40,16 L52,4 L50,14 L44,24 Z" fill="#4a4034"/><path d="M24,26 L30,26 L31,31 L26,31 Z" fill="#f0f0f0"/><path d="M34,38 L38,40 L36,44 Z" fill="#d8b040"/><path d="M50,3 L57,0 L55,7 Z" fill="#48c8b8"/><g transform="translate(0,43)"><rect x="0.500" y="0.500" width="16" height="16" fill="#f7f7f7" stroke="#d0d0d0"/><path d="M5,14 Q5.500,8.500 10.500,7" stroke="#1f4f9e" stroke-width="3.200" fill="none"/><path d="M7.500,3.500 L14.500,3 L13,10 Z" fill="#1f4f9e"/></g></svg>
<span class="t lbl" style="left:110.00px;top:932.90px;font-size:15px;line-height:18px;color:#fff;letter-spacing:-0.116px;">3D Vision</span>
<span class="t lbl" style="left:97.50px;top:953.10px;font-size:15px;line-height:18px;color:#fff;letter-spacing:-0.086px;">Photo Viewer</span>
<svg class="b" style="left:207px;top:868px;" width="60" height="60" viewBox="0 0 60 60"><path d="M11,3.500 H41 L51,13.500 V55.500 H11 Z" fill="#fff" stroke="#dcdcdc"/><path d="M41,3.500 V13.500 H51" fill="#e4e4e4"/><path d="M27,14 h14 M27,19 h20 M27,24 h20 M27,29 h20 M27,34 h20 M27,39 h20 M27,44 h20 M27,49 h20" stroke="#8a8a8a" stroke-width="1.700"/><path d="M3.500,22 L26.500,19 V52.500 L3.500,49.500 Z" fill="#2b579a"/><text x="6.500" y="43" font-family="Liberation Sans" font-weight="bold" font-size="19" fill="#fff" textLength="17" lengthAdjust="spacingAndGlyphs">W</text></svg>
<span class="t lbl" style="left:197.50px;top:932.90px;font-size:15px;line-height:18px;color:#fff;letter-spacing:-0.285px;">Rolls-Royce</span>
<span class="t lbl" style="left:192.00px;top:953.10px;font-size:15px;line-height:18px;color:#fff;letter-spacing:0.259px;">Application 2</span>
<svg class="b" style="left:1442px;top:376px;" width="60" height="60" viewBox="0 0 60 60"><defs><linearGradient id="cmc27" x1="0" y1="0" x2="1" y2="0"><stop offset="0" stop-color="#f0e050"/><stop offset=".3" stop-color="#7ab8e8"/><stop offset=".6" stop-color="#2a5ad8"/><stop offset="1" stop-color="#2438b8"/></linearGradient></defs><g transform="translate(0,4) scale(1,.88)"><path d="M6,14 L40,2 Q52,2 54,12 L58,36 Q58,44 50,48 L28,58 Q20,58 16,52 L4,24 Q2,16 6,14 Z" fill="#c9cdd5" opacity=".9"/><path d="M10,18 L38,8 Q48,8 50,16 L52,34 Q52,40 46,43 L29,51 Q23,51 20,46 L10,26 Q8,20 10,18 Z" fill="#e4e7eb" opacity=".9"/><path d="M18,17 L44,12 Q49,22 47,37 L23,42 Q16,30 18,17 Z" fill="url(#cmc27)"/><path d="M18,30 L46,26 L47,37 L23,42 Z" fill="#f0d848" opacity=".55"/><ellipse cx="19.500" cy="29.500" rx="3.500" ry="12.500" fill="#2a3ab0" opacity=".85"/></g><g transform="translate(0,43)"><rect x="0.500" y="0.500" width="16" height="16" fill="#f7f7f7" stroke="#d0d0d0"/><path d="M5,14 Q5.500,8.500 10.500,7" stroke="#1f4f9e" stroke-width="3.200" fill="none"/><path d="M7.500,3.500 L14.500,3 L13,10 Z" fill="#1f4f9e"/></g></svg>
<span class="t lbl" style="left:1441.00px;top:440.90px;font-size:15px;line-height:18px;color:#fff;letter-spacing:-1.002px;">COMSOL</span>
<span class="t lbl" style="left:1432.50px;top:461.10px;font-size:15px;line-height:18px;color:#fff;letter-spacing:-0.183px;">Multiphysi...</span>
<svg class="b" style="left:1442px;top:499px;" width="60" height="60" viewBox="0 0 60 60"><defs><linearGradient id="cmc28" x1="0" y1="0" x2="1" y2="0"><stop offset="0" stop-color="#f0e050"/><stop offset=".3" stop-color="#7ab8e8"/><stop offset=".6" stop-color="#2a5ad8"/><stop offset="1" stop-color="#2438b8"/></linearGradient></defs><g transform="translate(0,4) scale(1,.88)"><path d="M6,14 L40,2 Q52,2 54,12 L58,36 Q58,44 50,48 L28,58 Q20,58 16,52 L4,24 Q2,16 6,14 Z" fill="#c9cdd5" opacity=".9"/><path d="M10,18 L38,8 Q48,8 50,16 L52,34 Q52,40 46,43 L29,51 Q23,51 20,46 L10,26 Q8,20 10,18 Z" fill="#e4e7eb" opacity=".9"/><path d="M18,17 L44,12 Q49,22 47,37 L23,42 Q16,30 18,17 Z" fill="url(#cmc28)"/><path d="M18,30 L46,26 L47,37 L23,42 Z" fill="#f0d848" opacity=".55"/><ellipse cx="19.500" cy="29.500" rx="3.500" ry="12.500" fill="#2a3ab0" opacity=".85"/></g><g transform="translate(30,28) scale(1.0)"><path d="M0,4 Q10,4 14,0 Q18,4 28,4 Q28,20 14,30 Q0,20 0,4 Z" fill="#f0f0f0"/><path d="M1.500,5.200 Q10,5 14,1.800 V15 H1.800 Q1.500,10 1.500,5.200 Z" fill="#2a6ad0"/><path d="M26.500,5.200 Q18,5 14,1.800 V15 H26.200 Q26.500,10 26.500,5.200 Z" fill="#f0b020"/><path d="M1.800,15 H14 V28.300 Q4,22 1.800,15 Z" fill="#f0b020"/><path d="M26.200,15 H14 V28.300 Q24,22 26.200,15 Z" fill="#2a6ad0"/></g></svg>
<span class="t lbl" style="left:1429.00px;top:563.90px;font-size:15px;line-height:18px;color:#fff;letter-spacing:-1.020px;">COMSOL53...</span>
<svg class="b" style="left:1442px;top:622px;" width="60" height="60" viewBox="0 0 60 60"><path d="M11,4 H38 L49.500,15 V56 H11 Z" fill="#fcfcfc"/><path d="M38,4 V15 H49.500 Z" fill="#dcdcdc"/></svg>
<span class="t lbl" style="left:1429.00px;top:686.90px;font-size:15px;line-height:18px;color:#fff;letter-spacing:-1.044px;">License_5_3...</span>
<div class="b" style="left:397px;top:78px;width:949px;height:838px;background:#fff;box-shadow:0 0 0 1px rgba(40,50,70,.35),0 2px 16px rgba(0,0,0,.5);"></div>
<svg class="b" style="left:409px;top:88px" width="18" height="20" viewBox="0 0 18 20"><path d="M1,3 L6,2 L6,19.5 L1,17.5 Z" fill="#e9c558"/><path d="M2.5,3 L10.5,3 L10.5,8.5 L12.5,9.5 L12.5,17 L2.5,17 Z" fill="#f9da7a"/><path d="M1,3 L4,4.2 L4,19.8 L1,17.5 Z" fill="#fde7a0"/></svg>
<div class="b" style="left:432px;top:91px;width:1px;height:16px;background:#9a9a9a;"></div>
<svg class="b" style="left:447px;top:88px;" width="16" height="20" viewBox="0 0 16 20"><path d="M1.5,1.5 L11,1.5 L14.5,5 L14.5,18.5 L1.5,18.5 Z" fill="#fafafa" stroke="#8c8c8c"/><path d="M4,10 L7,13.5 L12.5,6.5" fill="none" stroke="#e8531a" stroke-width="1.8"/></svg>
<svg class="b" style="left:473px;top:88px" width="18" height="20" viewBox="0 0 18 20"><path d="M1,3 L6,2 L6,19.5 L1,17.5 Z" fill="#e9c558"/><path d="M2.5,3 L10.5,3 L10.5,8.5 L12.5,9.5 L12.5,17 L2.5,17 Z" fill="#f9da7a"/><path d="M1,3 L4,4.2 L4,19.8 L1,17.5 Z" fill="#fde7a0"/></svg>
<svg class="b" style="left:497px;top:95px;" width="10" height="8" viewBox="0 0 10 8"><rect x="1.5" y="0.5" width="7" height="1.4" fill="#222"/><path d="M1.5,3.2 L8.5,3.2 L5,7 Z" fill="#222"/></svg>
<div class="b" style="left:519px;top:91px;width:1px;height:16px;background:#9a9a9a;"></div>
<span class="t" style="left:527.00px;top:88.50px;font-size:15px;line-height:18px;color:#000;letter-spacing:-0.006px;">logs</span>
<svg class="b" style="left:1185px;top:84px;" width="150" height="26" viewBox="0 0 150 26"><path d="M8,13.5 H19" stroke="#111" stroke-width="1.2"/><rect x="66.5" y="7.5" width="11" height="11" fill="none" stroke="#111" stroke-width="1.2"/><path d="M125,7 L137,19 M137,7 L125,19" stroke="#111" stroke-width="1.3"/></svg>
<div class="b" style="left:398px;top:116px;width:70px;height:28px;background:#1979ca;"></div>
<span class="t" style="left:423.50px;top:122.50px;font-size:13px;line-height:16px;color:#fff;letter-spacing:-0.649px;">File</span>
<div class="b" style="left:468px;top:116px;width:69px;height:29px;background:#f5f6f7;border:1px solid #dadbdc;border-bottom:none;"></div>
<span class="t" style="left:484.50px;top:122.50px;font-size:13px;line-height:16px;color:#222;letter-spacing:0.107px;">Home</span>
<span class="t" style="left:554.50px;top:122.50px;font-size:13px;line-height:16px;color:#222;letter-spacing:-0.423px;">Share</span>
<span class="t" style="left:622.50px;top:122.50px;font-size:13px;line-height:16px;color:#222;letter-spacing:-0.315px;">View</span>
<svg class="b" style="left:1299px;top:124px;" width="16" height="10" viewBox="0 0 16 10"><path d="M2,8 L8,2 L14,8" fill="none" stroke="#9a9a9a" stroke-width="1.3"/></svg>
<svg class="b" style="left:1323px;top:121px;" width="19" height="19" viewBox="0 0 19 19"><circle cx="9.5" cy="9.5" r="9" fill="#0f6fd0"/></svg>
<span class="t" style="left:1328.22px;top:122.00px;font-size:14px;line-height:17px;color:#fff;font-weight:bold;">?</span>
<div class="b" style="left:398px;top:144px;width:948px;height:114px;background:#f5f6f7;border-top:1px solid #dadbdc;border-bottom:1px solid #dadbdc;"></div>
<div class="b" style="left:469px;top:144px;width:67px;height:1px;background:#f5f6f7;"></div>
<div class="b" style="left:698px;top:148px;width:1px;height:106px;background:#e2e3e4;"></div>
<div class="b" style="left:920px;top:148px;width:1px;height:106px;background:#e2e3e4;"></div>
<div class="b" style="left:1017px;top:148px;width:1px;height:106px;background:#e2e3e4;"></div>
<div class="b" style="left:1168px;top:148px;width:1px;height:106px;background:#e2e3e4;"></div>
<div class="b" style="left:1297px;top:148px;width:1px;height:106px;background:#e2e3e4;"></div>
<div class="b" style="left:807px;top:163px;width:1px;height:54px;background:#e2e3e4;"></div>
<svg class="b" style="left:424px;top:158px;" width="36" height="34" viewBox="0 0 36 34"><path d="M20,3 L31,13 L27,15 L21,21 L22,26 L8,13 L13,13 L18,7 Z" fill="#8c959b"/><path d="M14,20 L3,31" stroke="#8c959b" stroke-width="3"/></svg>
<span class="t" style="left:407.00px;top:196.80px;font-size:13px;line-height:16px;color:#1e1e1e;letter-spacing:-0.099px;">Pin to Quick</span>
<span class="t" style="left:422.50px;top:213.80px;font-size:13px;line-height:16px;color:#1e1e1e;letter-spacing:-0.692px;">access</span>
<svg class="b" style="left:488px;top:153px;" width="32" height="40" viewBox="0 0 32 40"><path d="M1.5,1.5 h13 l5,5 v21 h-18 Z" fill="#f4f6fb" stroke="#b9c3dc"/><path d="M4.5,9.5 h12" stroke="#c5cde2" stroke-width="1"/><path d="M4.5,12.5 h12" stroke="#c5cde2" stroke-width="1"/><path d="M4.5,15.5 h12" stroke="#c5cde2" stroke-width="1"/><path d="M4.5,18.5 h12" stroke="#c5cde2" stroke-width="1"/><path d="M4.5,21.5 h12" stroke="#c5cde2" stroke-width="1"/><path d="M4.5,24.5 h12" stroke="#c5cde2" stroke-width="1"/><path d="M11.5,10.5 h13 l5,5 v21 h-18 Z" fill="#f4f6fb" stroke="#b9c3dc"/><path d="M14.5,18.5 h12" stroke="#c5cde2" stroke-width="1"/><path d="M14.5,21.5 h12" stroke="#c5cde2" stroke-width="1"/><path d="M14.5,24.5 h12" stroke="#c5cde2" stroke-width="1"/><path d="M14.5,27.5 h12" stroke="#c5cde2" stroke-width="1"/><path d="M14.5,30.5 h12" stroke="#c5cde2" stroke-width="1"/><path d="M14.5,33.5 h12" stroke="#c5cde2" stroke-width="1"/></svg>
<span class="t" style="left:488.25px;top:196.80px;font-size:13px;line-height:16px;color:#8a8f96;letter-spacing:-0.283px;">Copy</span>
<svg class="b" style="left:540px;top:152px;" width="28" height="40" viewBox="0 0 28 40"><rect x="1.5" y="5.5" width="24" height="32" rx="2" fill="#8793b8" /><rect x="4.5" y="8.5" width="18" height="26" fill="#eef1fa"/><rect x="8" y="2" width="11" height="6" rx="1.5" fill="#8793b8"/><path d="M6,12 h15" stroke="#cfd6ea" stroke-width="1"/><path d="M6,15 h15" stroke="#cfd6ea" stroke-width="1"/><path d="M6,18 h15" stroke="#cfd6ea" stroke-width="1"/><path d="M6,21 h15" stroke="#cfd6ea" stroke-width="1"/><path d="M6,24 h15" stroke="#cfd6ea" stroke-width="1"/><path d="M6,27 h15" stroke="#cfd6ea" stroke-width="1"/><path d="M6,30 h15" stroke="#cfd6ea" stroke-width="1"/></svg>
<span class="t" style="left:538.00px;top:196.80px;font-size:13px;line-height:16px;color:#8a8f96;letter-spacing:-0.811px;">Paste</span>
<svg class="b" style="left:584px;top:152px;" width="16" height="20" viewBox="0 0 16 20"><path d="M4,1 L10,12 M12,1 L6,12" stroke="#97a3c4" stroke-width="1.6" fill="none"/><circle cx="5" cy="15.5" r="2.6" fill="none" stroke="#97a3c4" stroke-width="1.5"/><circle cx="11" cy="15.5" r="2.6" fill="none" stroke="#97a3c4" stroke-width="1.5"/></svg>
<span class="t" style="left:605.50px;top:154.80px;font-size:13px;line-height:16px;color:#8a8f96;letter-spacing:-0.865px;">Cut</span>
<svg class="b" style="left:583px;top:182px;" width="19" height="13" viewBox="0 0 19 13"><rect x="0.5" y="0.5" width="18" height="11" fill="#dfe5f3" stroke="#b4bfdb"/><path d="M3,3 L6,9 M6,3 L9,9 M11,9 h1 M13.5,9 h1 M16,9 h1" stroke="#5c6a94" stroke-width="1"/></svg>
<span class="t" style="left:605.50px;top:181.30px;font-size:13px;line-height:16px;color:#8a8f96;letter-spacing:-0.033px;">Copy path</span>
<svg class="b" style="left:584px;top:203px;" width="16" height="21" viewBox="0 0 16 21"><rect x="1" y="3.5" width="13.5" height="16.5" fill="#8793b8"/><rect x="3" y="6" width="9.5" height="12" fill="#eef1fa"/><rect x="5" y="1" width="5.5" height="4" fill="#8793b8"/><path d="M5,15 L10,10 M7,9.5 h3.5 v3.5" stroke="#5c6a94" stroke-width="1.4" fill="none"/></svg>
<span class="t" style="left:605.50px;top:207.30px;font-size:13px;line-height:16px;color:#8a8f96;letter-spacing:-0.123px;">Paste shortcut</span>
<span class="t" style="left:519.50px;top:238.80px;font-size:13px;line-height:16px;color:#5a5a5a;letter-spacing:0.169px;">Clipboard</span>
<svg class="b" style="left:714px;top:153px;" width="34" height="40" viewBox="0 0 34 40"><rect x="1" y="2" width="27" height="35" fill="#dde3f2"/><rect x="1" y="2" width="3" height="35" fill="#ccd4ea"/><path d="M33,22 h-10 v-7 l-11,11 l11,11 v-7 h10 Z" fill="#9fadd0"/></svg>
<span class="t" style="left:711.00px;top:196.80px;font-size:13px;line-height:16px;color:#8a8f96;letter-spacing:0.070px;">Move</span>
<span class="t" style="left:716.50px;top:213.80px;font-size:13px;line-height:16px;color:#8a8f96;letter-spacing:0.158px;">to</span>
<svg class="b" style="left:731px;top:219px;" width="8" height="5" viewBox="0 0 8 5"><path d="M0.5,0.5 L7.5,0.5 L4,4.5 Z" fill="#b5b9c0"/></svg>
<svg class="b" style="left:764px;top:151px;" width="36" height="42" viewBox="0 0 36 42"><rect x="1" y="4" width="28" height="35" fill="#dde3f2"/><rect x="1" y="4" width="3" height="35" fill="#ccd4ea"/><path d="M15,1.5 h8 l4,4 v13 h-12 Z" fill="#f4f6fb" stroke="#aab6d6"/><path d="M20,6.5 h9 l4,4 v12 h-13 Z" fill="#f4f6fb" stroke="#aab6d6"/><path d="M22,13 h9 M22,15.5 h9 M22,18 h9 M22,20.5 h9" stroke="#b9c3dc"/></svg>
<span class="t" style="left:762.25px;top:196.80px;font-size:13px;line-height:16px;color:#8a8f96;letter-spacing:-0.283px;">Copy</span>
<span class="t" style="left:766.50px;top:213.80px;font-size:13px;line-height:16px;color:#8a8f96;letter-spacing:0.158px;">to</span>
<svg class="b" style="left:781px;top:219px;" width="8" height="5" viewBox="0 0 8 5"><path d="M0.5,0.5 L7.5,0.5 L4,4.5 Z" fill="#b5b9c0"/></svg>
<svg class="b" style="left:819px;top:156px;" width="34" height="32" viewBox="0 0 34 32"><path d="M3,3 L30,29 M30,3 L3,29" stroke="#7f8fb6" stroke-width="5.5"/></svg>
<span class="t" style="left:816.50px;top:196.80px;font-size:13px;line-height:16px;color:#1e1e1e;letter-spacing:-0.116px;">Delete</span>
<svg class="b" style="left:831px;top:217px;" width="8" height="5" viewBox="0 0 8 5"><path d="M0.5,0.5 L7.5,0.5 L4,4.5 Z" fill="#222"/></svg>
<svg class="b" style="left:868px;top:154px;" width="42" height="36" viewBox="0 0 42 36"><rect x="1.5" y="9.5" width="34" height="16" fill="#edf0f8" stroke="#b3bedb"/><rect x="4" y="12.5" width="18" height="10" fill="#a9b5d5"/><path d="M25,2 q6,0 6,4 v24 q0,4 -6,4 M37,2 q-6,0 -6,4 M37,34 q-6,0 -6,-4 M28,17.5 h6" fill="none" stroke="#a0adcf" stroke-width="1.6"/></svg>
<span class="t" style="left:863.00px;top:196.80px;font-size:13px;line-height:16px;color:#8a8f96;letter-spacing:-0.628px;">Rename</span>
<span class="t" style="left:781.00px;top:238.80px;font-size:13px;line-height:16px;color:#5a5a5a;letter-spacing:-0.107px;">Organize</span>
<svg class="b" style="left:935px;top:154px;" width="28" height="38" viewBox="0 0 28 38"><path d="M2,2 L12,0 L12,37 L2,33 Z" fill="#e9c558"/><path d="M5,2.5 L21,2.5 L21,14 L25,16 L25,30 L5,30 Z" fill="#f9da7a"/><path d="M2,2 L8.5,4.2 L8.5,37 L2,33 Z" fill="#fde7a0"/></svg>
<span class="t" style="left:937.00px;top:196.80px;font-size:13px;line-height:16px;color:#1e1e1e;letter-spacing:-1.004px;">New</span>
<span class="t" style="left:931.50px;top:213.80px;font-size:13px;line-height:16px;color:#1e1e1e;letter-spacing:0.496px;">folder</span>
<svg class="b" style="left:978px;top:152px;" width="32" height="22" viewBox="0 0 32 22"><rect x="1.5" y="1.5" width="12" height="10" fill="#fff" stroke="#7b8bb0"/><rect x="3" y="3" width="5" height="4" fill="#d66"/><rect x="6.500" y="6.500" width="11" height="13" fill="#f4f6fb" stroke="#7b8bb0"/><rect x="11.500" y="9.500" width="9" height="11" fill="#fff" stroke="#7b8bb0"/><path d="M13,13 h6 M13,15.500 h6 M13,18 h6" stroke="#a44"/><path d="M23.500,8.500 h6 l-3,3.500 Z" fill="#222"/></svg>
<svg class="b" style="left:978px;top:178px;" width="32" height="22" viewBox="0 0 32 22"><path d="M6.5,2.500 h8 l3,3 v14 h-11 Z" fill="#fff" stroke="#8a8a8a"/><path d="M1,5.500 h6 M2,8 h5 M1,10.500 h5" stroke="#2a7ad0" stroke-width="1.2"/><path d="M23.500,8.500 h6 l-3,3.500 Z" fill="#222"/></svg>
<span class="t" style="left:955.00px;top:238.80px;font-size:13px;line-height:16px;color:#5a5a5a;letter-spacing:-1.004px;">New</span>
<svg class="b" style="left:1039px;top:153px;" width="30" height="38" viewBox="0 0 30 38"><path d="M1.5,1.5 h21 l6,6 v28.5 h-27 Z" fill="#fdfdfd" stroke="#9a9a9a"/><path d="M22.500,1.500 v6 h6" fill="none" stroke="#9a9a9a"/><path d="M6,20 L12.500,27 L24,12.500" fill="none" stroke="#e8531a" stroke-width="2.8"/></svg>
<span class="t" style="left:1023.50px;top:196.80px;font-size:13px;line-height:16px;color:#1e1e1e;letter-spacing:0.083px;">Properties</span>
<svg class="b" style="left:1050px;top:217px;" width="8" height="5" viewBox="0 0 8 5"><path d="M0.5,0.5 L7.5,0.5 L4,4.5 Z" fill="#222"/></svg>
<svg class="b" style="left:1092px;top:153px;" width="18" height="20" viewBox="0 0 18 20"><rect x="1.500" y="1.500" width="13" height="16" fill="#eef1fa" stroke="#a9b5d5"/><rect x="3.500" y="4" width="3" height="3" fill="#8f9cc0"/><rect x="3.500" y="8.500" width="3" height="3" fill="#8f9cc0"/><rect x="3.500" y="13" width="3" height="3" fill="#8f9cc0"/><path d="M11.500,19 v-7 h-3.500 l5.500,-5.500 l5.500,5.500 h-3.500 v7 Z" fill="#8f9cc0"/></svg>
<span class="t" style="left:1113.00px;top:155.80px;font-size:13px;line-height:16px;color:#8a8f96;letter-spacing:0.066px;">Open</span>
<svg class="b" style="left:1150px;top:161px;" width="7" height="4" viewBox="0 0 7 4"><path d="M0,0 L7,0 L3.5,4 Z" fill="#b5b9c0"/></svg>
<svg class="b" style="left:1092px;top:180px;" width="18" height="20" viewBox="0 0 18 20"><path d="M1.500,1.500 h10 l4,4 v12.500 h-14 Z" fill="#f6f8fd" stroke="#b3bedb"/><path d="M4,15 L13,3 L16,5.500 L7,17 L3.500,18 Z" fill="#dfe5f3" stroke="#a0adcf"/></svg>
<span class="t" style="left:1113.00px;top:182.80px;font-size:13px;line-height:16px;color:#8a8f96;letter-spacing:-0.134px;">Edit</span>
<svg class="b" style="left:1092px;top:208px;" width="20" height="20" viewBox="0 0 20 20"><path d="M1,1 L7,0 L7,17 L1,15 Z" fill="#e9c558"/><path d="M3,1.500 L12,1.500 L12,7 L14,8 L14,14.500 L3,14.500 Z" fill="#f9da7a"/><circle cx="13" cy="14" r="4.500" fill="#f2f2f2" stroke="#8a8a8a"/><path d="M13,11.500 v2.500 h2" stroke="#555" fill="none"/><path d="M4,11 q3,6 7,4" stroke="#3a9a3a" stroke-width="2" fill="none"/></svg>
<span class="t" style="left:1113.00px;top:209.80px;font-size:13px;line-height:16px;color:#1e1e1e;letter-spacing:0.092px;">History</span>
<span class="t" style="left:1075.50px;top:238.80px;font-size:13px;line-height:16px;color:#5a5a5a;letter-spacing:-0.267px;">Open</span>
<svg class="b" style="left:1176px;top:152px;" width="20" height="20" viewBox="0 0 20 20"><rect x="1.5" y="1.5" width="7" height="7" fill="#9fd3f5" stroke="#2a8fd6"/><rect x="10.5" y="1.5" width="7" height="7" fill="#9fd3f5" stroke="#2a8fd6"/><rect x="1.5" y="10.5" width="7" height="7" fill="#9fd3f5" stroke="#2a8fd6"/><rect x="10.5" y="10.5" width="7" height="7" fill="#9fd3f5" stroke="#2a8fd6"/></svg>
<span class="t" style="left:1199.00px;top:154.80px;font-size:13px;line-height:16px;color:#1e1e1e;letter-spacing:-0.195px;">Select all</span>
<svg class="b" style="left:1176px;top:178px;" width="20" height="20" viewBox="0 0 20 20"><rect x="1.5" y="1.5" width="7" height="7" fill="#fafafa" stroke="#a8a8a8"/><rect x="10.5" y="1.5" width="7" height="7" fill="#fafafa" stroke="#a8a8a8"/><rect x="1.5" y="10.5" width="7" height="7" fill="#fafafa" stroke="#a8a8a8"/><rect x="10.5" y="10.5" width="7" height="7" fill="#fafafa" stroke="#a8a8a8"/></svg>
<span class="t" style="left:1199.00px;top:180.80px;font-size:13px;line-height:16px;color:#1e1e1e;letter-spacing:-0.166px;">Select none</span>
<svg class="b" style="left:1176px;top:204px;" width="20" height="20" viewBox="0 0 20 20"><rect x="1.5" y="1.5" width="7" height="7" fill="#fafafa" stroke="#a8a8a8"/><rect x="10.5" y="1.5" width="7" height="7" fill="#9fd3f5" stroke="#2a8fd6"/><rect x="1.5" y="10.5" width="7" height="7" fill="#9fd3f5" stroke="#2a8fd6"/><rect x="10.5" y="10.5" width="7" height="7" fill="#fafafa" stroke="#a8a8a8"/></svg>
<span class="t" style="left:1199.00px;top:206.80px;font-size:13px;line-height:16px;color:#1e1e1e;letter-spacing:-0.029px;">Invert selection</span>
<span class="t" style="left:1214.00px;top:238.80px;font-size:13px;line-height:16px;color:#5a5a5a;letter-spacing:-0.426px;">Select</span>
<svg class="b" style="left:412px;top:270px;" width="20" height="18" viewBox="0 0 20 18"><path d="M17,9 H3 M9,3 L3,9 L9,15" fill="none" stroke="#555" stroke-width="1.5"/></svg>
<svg class="b" style="left:450px;top:270px;" width="20" height="18" viewBox="0 0 20 18"><path d="M3,9 H17 M11,3 L17,9 L11,15" fill="none" stroke="#d0d0d0" stroke-width="1.5"/></svg>
<svg class="b" style="left:484px;top:275px;" width="12" height="8" viewBox="0 0 12 8"><path d="M1.5,1.5 L6,6 L10.5,1.5" fill="none" stroke="#666" stroke-width="1.4"/></svg>
<svg class="b" style="left:507px;top:270px;" width="18" height="18" viewBox="0 0 18 18"><path d="M9,16 V3 M3,9 L9,3 L15,9" fill="none" stroke="#555" stroke-width="1.5"/></svg>
<div class="b" style="left:532px;top:266px;width:609px;height:27px;background:#fff;border:1px solid #d9d9d9;"></div>
<div class="b" style="left:1119px;top:267px;width:1px;height:25px;background:#d9d9d9;"></div>
<svg class="b" style="left:538px;top:269px" width="18" height="20" viewBox="0 0 18 20"><path d="M1,3 L6,2 L6,19.5 L1,17.5 Z" fill="#e9c558"/><path d="M2.5,3 L10.5,3 L10.5,8.5 L12.5,9.5 L12.5,17 L2.5,17 Z" fill="#f9da7a"/><path d="M1,3 L4,4.2 L4,19.8 L1,17.5 Z" fill="#fde7a0"/></svg>
<span class="t" style="left:580.00px;top:269.50px;font-size:15px;line-height:18px;color:#000;letter-spacing:-1.057px;">This PC</span>
<span class="t" style="left:654.00px;top:269.50px;font-size:15px;line-height:18px;color:#000;letter-spacing:-0.972px;">OS (C:)</span>
<span class="t" style="left:726.00px;top:269.50px;font-size:15px;line-height:18px;color:#000;letter-spacing:-1.043px;">Users</span>
<span class="t" style="left:788.00px;top:269.50px;font-size:15px;line-height:18px;color:#000;letter-spacing:-0.003px;">hakim</span>
<span class="t" style="left:854.00px;top:269.50px;font-size:15px;line-height:18px;color:#000;letter-spacing:-0.113px;">.comsol</span>
<span class="t" style="left:933.00px;top:269.50px;font-size:15px;line-height:18px;color:#000;letter-spacing:-0.509px;">v53a</span>
<span class="t" style="left:991.00px;top:269.50px;font-size:15px;line-height:18px;color:#000;letter-spacing:0.161px;">logs</span>
<svg class="b" style="left:564px;top:274px;" width="7" height="10" viewBox="0 0 7 10"><path d="M1,1 L5,5 L1,9" fill="none" stroke="#666" stroke-width="1.2"/></svg>
<svg class="b" style="left:637px;top:274px;" width="7" height="10" viewBox="0 0 7 10"><path d="M1,1 L5,5 L1,9" fill="none" stroke="#666" stroke-width="1.2"/></svg>
<svg class="b" style="left:709px;top:274px;" width="7" height="10" viewBox="0 0 7 10"><path d="M1,1 L5,5 L1,9" fill="none" stroke="#666" stroke-width="1.2"/></svg>
<svg class="b" style="left:772px;top:274px;" width="7" height="10" viewBox="0 0 7 10"><path d="M1,1 L5,5 L1,9" fill="none" stroke="#666" stroke-width="1.2"/></svg>
<svg class="b" style="left:839px;top:274px;" width="7" height="10" viewBox="0 0 7 10"><path d="M1,1 L5,5 L1,9" fill="none" stroke="#666" stroke-width="1.2"/></svg>
<svg class="b" style="left:917px;top:274px;" width="7" height="10" viewBox="0 0 7 10"><path d="M1,1 L5,5 L1,9" fill="none" stroke="#666" stroke-width="1.2"/></svg>
<svg class="b" style="left:975px;top:274px;" width="7" height="10" viewBox="0 0 7 10"><path d="M1,1 L5,5 L1,9" fill="none" stroke="#666" stroke-width="1.2"/></svg>
<svg class="b" style="left:1103px;top:275px;" width="12" height="8" viewBox="0 0 12 8"><path d="M1,1 L6,6.500 L11,1" fill="none" stroke="#444" stroke-width="1.4"/></svg>
<svg class="b" style="left:1122px;top:271px;" width="17" height="17" viewBox="0 0 17 17"><path d="M13.500,5.500 A6,6 0 1 0 14.500,9" fill="none" stroke="#666" stroke-width="1.4"/><path d="M14.500,2 V6.500 H10" fill="none" stroke="#666" stroke-width="1.4"/></svg>
<div class="b" style="left:1153px;top:266px;width:181px;height:27px;background:#fff;border:1px solid #d9d9d9;"></div>
<span class="t" style="left:1163.00px;top:270.50px;font-size:15px;line-height:18px;color:#6d6d6d;letter-spacing:-0.321px;">Search logs</span>
<svg class="b" style="left:1308px;top:272px;" width="15" height="15" viewBox="0 0 15 15"><circle cx="9.500" cy="5.500" r="4" fill="none" stroke="#555" stroke-width="1.5"/><path d="M6.500,8.500 L1.500,13.500" stroke="#555" stroke-width="1.7"/></svg>
<svg class="b" style="left:428px;top:328px;" width="20" height="18" viewBox="0 0 20 18"><path d="M11,1 L13.500,7 L19.500,7.300 L14.800,11.200 L16.500,17 L11,13.700 L6,17 L7.500,11.200 L3,7.300 L8.800,7 Z" fill="#2f94dc"/><path d="M1,9 h4 M0,12 h5 M2,15 h3" stroke="#2f94dc" stroke-width="1.2"/></svg>
<span class="t" style="left:453.00px;top:328.50px;font-size:15px;line-height:18px;color:#000;letter-spacing:-0.563px;">Quick access</span>
<svg class="b" style="left:440px;top:357px" width="18" height="20" viewBox="0 0 18 20"><path d="M1,3 L6,2 L6,19.5 L1,17.5 Z" fill="#e9c558"/><path d="M2.5,3 L10.5,3 L10.5,8.5 L12.5,9.5 L12.5,17 L2.5,17 Z" fill="#f9da7a"/><path d="M1,3 L4,4.2 L4,19.8 L1,17.5 Z" fill="#fde7a0"/><rect x="6" y="10" width="11" height="7.500" fill="#1e90e6"/><path d="M8,16 h1 M10,16 h1 M12,16 h1" stroke="#fff" stroke-width="0.8"/></svg>
<span class="t" style="left:463.00px;top:358.50px;font-size:15px;line-height:18px;color:#000;letter-spacing:-0.171px;">Desktop</span>
<svg class="b" style="left:440px;top:387px" width="18" height="20" viewBox="0 0 18 20"><path d="M1,3 L6,2 L6,19.5 L1,17.5 Z" fill="#e9c558"/><path d="M2.5,3 L10.5,3 L10.5,8.5 L12.5,9.5 L12.5,17 L2.5,17 Z" fill="#f9da7a"/><path d="M1,3 L4,4.2 L4,19.8 L1,17.5 Z" fill="#fde7a0"/><path d="M9,8 h5 v4.500 h3 l-5.500,5.500 l-5.500,-5.500 h3 Z" fill="#2f7fd8"/></svg>
<span class="t" style="left:463.00px;top:388.50px;font-size:15px;line-height:18px;color:#000;letter-spacing:0.099px;">Downloads</span>
<svg class="b" style="left:440px;top:417px" width="18" height="20" viewBox="0 0 18 20"><path d="M1,3 L6,2 L6,19.5 L1,17.5 Z" fill="#e9c558"/><path d="M2.5,3 L10.5,3 L10.5,8.5 L12.5,9.5 L12.5,17 L2.5,17 Z" fill="#f9da7a"/><path d="M1,3 L4,4.2 L4,19.8 L1,17.5 Z" fill="#fde7a0"/></svg>
<span class="t" style="left:463.00px;top:418.50px;font-size:15px;line-height:18px;color:#000;letter-spacing:-0.108px;">Documents</span>
<svg class="b" style="left:440px;top:447px" width="18" height="20" viewBox="0 0 18 20"><path d="M1,3 L6,2 L6,19.5 L1,17.5 Z" fill="#e9c558"/><path d="M2.5,3 L10.5,3 L10.5,8.5 L12.5,9.5 L12.5,17 L2.5,17 Z" fill="#f9da7a"/><path d="M1,3 L4,4.2 L4,19.8 L1,17.5 Z" fill="#fde7a0"/></svg>
<span class="t" style="left:463.00px;top:448.50px;font-size:15px;line-height:18px;color:#000;letter-spacing:-1.671px;">HYPED</span>
<svg class="b" style="left:440px;top:477px" width="18" height="20" viewBox="0 0 18 20"><path d="M1,3 L6,2 L6,19.5 L1,17.5 Z" fill="#e9c558"/><path d="M2.5,3 L10.5,3 L10.5,8.5 L12.5,9.5 L12.5,17 L2.5,17 Z" fill="#f9da7a"/><path d="M1,3 L4,4.2 L4,19.8 L1,17.5 Z" fill="#fde7a0"/></svg>
<span class="t" style="left:463.00px;top:478.50px;font-size:15px;line-height:18px;color:#000;letter-spacing:0.161px;">logs</span>
<svg class="b" style="left:440px;top:507px" width="18" height="20" viewBox="0 0 18 20"><path d="M1,3 L6,2 L6,19.5 L1,17.5 Z" fill="#e9c558"/><path d="M2.5,3 L10.5,3 L10.5,8.5 L12.5,9.5 L12.5,17 L2.5,17 Z" fill="#f9da7a"/><path d="M1,3 L4,4.2 L4,19.8 L1,17.5 Z" fill="#fde7a0"/></svg>
<span class="t" style="left:463.00px;top:508.50px;font-size:15px;line-height:18px;color:#000;letter-spacing:-0.538px;">Screenshots</span>
<svg class="b" style="left:555px;top:360px;" width="14" height="14" viewBox="0 0 14 14"><path d="M8,1 L13,6 L11,7 L8.500,9.500 L9,12 L2.500,5.500 L5,6 L7.500,3.500 Z" fill="#8c959b"/><path d="M5.500,9 L1,13.500" stroke="#8c959b" stroke-width="1.5"/></svg>
<svg class="b" style="left:555px;top:390px;" width="14" height="14" viewBox="0 0 14 14"><path d="M8,1 L13,6 L11,7 L8.500,9.500 L9,12 L2.500,5.500 L5,6 L7.500,3.500 Z" fill="#8c959b"/><path d="M5.500,9 L1,13.500" stroke="#8c959b" stroke-width="1.5"/></svg>
<svg class="b" style="left:428px;top:548px;" width="22" height="20" viewBox="0 0 22 20"><path d="M5.500,1 L10.500,4 L5.500,7 L0.500,4 Z M15.500,1 L20.500,4 L15.500,7 L10.500,4 Z M5.500,7 L10.500,10 L5.500,13 L0.500,10 Z M15.500,7 L20.500,10 L15.500,13 L10.500,10 Z M10.500,11 L15,13.800 L10.500,16.500 L6,13.800 Z" fill="#0d6cf2"/><circle cx="4" cy="15" r="4" fill="#3aa84a"/><path d="M2,15 L3.600,16.600 L6.200,13.400" stroke="#fff" stroke-width="1.1" fill="none"/></svg>
<span class="t" style="left:453.00px;top:549.00px;font-size:15px;line-height:18px;color:#000;letter-spacing:0.384px;">Dropbox</span>
<svg class="b" style="left:428px;top:589px;" width="20" height="14" viewBox="0 0 20 14"><path d="M5,13 a4,4 0 0 1 0.500,-8 a5.500,5.500 0 0 1 10,1 a3.600,3.600 0 0 1 0.500,7 Z" fill="#1e86e0"/></svg>
<span class="t" style="left:453.00px;top:589.00px;font-size:15px;line-height:18px;color:#000;letter-spacing:-0.127px;">OneDrive - Univer</span>
<svg class="b" style="left:428px;top:628px;" width="22" height="20" viewBox="0 0 22 20"><path d="M6,2 L20,5 L20,14 L6,12 Z" fill="#3aa0e8"/><path d="M6,2 L20,5 L20,14 L6,12 Z" fill="none" stroke="#2678b8" stroke-width="0.8"/><path d="M2,16 L12,13 L18,16 L8,19.500 Z" fill="#d8dce0"/><path d="M10,12.500 v2" stroke="#888"/></svg>
<span class="t" style="left:453.00px;top:629.00px;font-size:15px;line-height:18px;color:#000;letter-spacing:-1.224px;">This PC</span>
<svg class="b" style="left:440px;top:657px" width="18" height="20" viewBox="0 0 18 20"><path d="M1,3 L6,2 L6,19.5 L1,17.5 Z" fill="#e9c558"/><path d="M2.5,3 L10.5,3 L10.5,8.5 L12.5,9.5 L12.5,17 L2.5,17 Z" fill="#f9da7a"/><path d="M1,3 L4,4.2 L4,19.8 L1,17.5 Z" fill="#fde7a0"/><path d="M11.500,8 L17,10 L17,16 L11.500,18.500 L6.500,16 L6.500,10 Z" fill="#55c8e8"/><path d="M11.500,12.500 L17,10 L17,16 L11.500,18.500 Z" fill="#2ba6d0"/><path d="M11.500,12.500 L6.500,10 L11.500,8 L17,10 Z" fill="#a8ecf8"/></svg>
<span class="t" style="left:463.00px;top:658.50px;font-size:15px;line-height:18px;color:#000;letter-spacing:-0.133px;">3D Objects</span>
<svg class="b" style="left:440px;top:687px" width="18" height="20" viewBox="0 0 18 20"><path d="M1,3 L6,2 L6,19.5 L1,17.5 Z" fill="#e9c558"/><path d="M2.5,3 L10.5,3 L10.5,8.5 L12.5,9.5 L12.5,17 L2.5,17 Z" fill="#f9da7a"/><path d="M1,3 L4,4.2 L4,19.8 L1,17.5 Z" fill="#fde7a0"/><rect x="6" y="10" width="11" height="7.500" fill="#1e90e6"/><path d="M8,16 h1 M10,16 h1 M12,16 h1" stroke="#fff" stroke-width="0.8"/></svg>
<span class="t" style="left:463.00px;top:688.50px;font-size:15px;line-height:18px;color:#000;letter-spacing:-0.171px;">Desktop</span>
<svg class="b" style="left:440px;top:717px" width="18" height="20" viewBox="0 0 18 20"><path d="M1,3 L6,2 L6,19.5 L1,17.5 Z" fill="#e9c558"/><path d="M2.5,3 L10.5,3 L10.5,8.5 L12.5,9.5 L12.5,17 L2.5,17 Z" fill="#f9da7a"/><path d="M1,3 L4,4.2 L4,19.8 L1,17.5 Z" fill="#fde7a0"/><path d="M6.500,5.500 h7 l3,3 v10 h-10 Z" fill="#fff" stroke="#8a8a8a"/><path d="M8.500,9 h3 M8.500,11.500 h6 M8.500,14 h6 M8.500,16.500 h6" stroke="#3a79c8"/></svg>
<span class="t" style="left:463.00px;top:718.50px;font-size:15px;line-height:18px;color:#000;letter-spacing:-0.108px;">Documents</span>
<svg class="b" style="left:440px;top:747px" width="18" height="20" viewBox="0 0 18 20"><path d="M1,3 L6,2 L6,19.5 L1,17.5 Z" fill="#e9c558"/><path d="M2.5,3 L10.5,3 L10.5,8.5 L12.5,9.5 L12.5,17 L2.5,17 Z" fill="#f9da7a"/><path d="M1,3 L4,4.2 L4,19.8 L1,17.5 Z" fill="#fde7a0"/><path d="M9,8 h5 v4.500 h3 l-5.500,5.500 l-5.500,-5.500 h3 Z" fill="#2f7fd8"/></svg>
<span class="t" style="left:463.00px;top:748.50px;font-size:15px;line-height:18px;color:#000;letter-spacing:0.099px;">Downloads</span>
<svg class="b" style="left:440px;top:777px" width="18" height="20" viewBox="0 0 18 20"><path d="M1,3 L6,2 L6,19.5 L1,17.5 Z" fill="#e9c558"/><path d="M2.5,3 L10.5,3 L10.5,8.5 L12.5,9.5 L12.5,17 L2.5,17 Z" fill="#f9da7a"/><path d="M1,3 L4,4.2 L4,19.8 L1,17.5 Z" fill="#fde7a0"/><path d="M10,5 v10" stroke="#2a8fe0" stroke-width="1.8"/><ellipse cx="8" cy="16" rx="3" ry="2.400" fill="#2a8fe0"/><path d="M10,5 q6,2 5,8" fill="none" stroke="#2a8fe0" stroke-width="1.8"/></svg>
<span class="t" style="left:463.00px;top:778.50px;font-size:15px;line-height:18px;color:#000;letter-spacing:-0.293px;">Music</span>
<svg class="b" style="left:440px;top:807px" width="18" height="20" viewBox="0 0 18 20"><path d="M1,3 L6,2 L6,19.5 L1,17.5 Z" fill="#e9c558"/><path d="M2.5,3 L10.5,3 L10.5,8.5 L12.5,9.5 L12.5,17 L2.5,17 Z" fill="#f9da7a"/><path d="M1,3 L4,4.2 L4,19.8 L1,17.5 Z" fill="#fde7a0"/><rect x="6.500" y="8.500" width="11" height="9" fill="#fff" stroke="#9a9a9a"/><path d="M8,16 l3,-4 l2,2 l2,-1.500 l1.500,3.500 Z" fill="#4a90c8"/></svg>
<span class="t" style="left:463.00px;top:808.50px;font-size:15px;line-height:18px;color:#000;letter-spacing:-0.455px;">Pictures</span>
<svg class="b" style="left:440px;top:837px" width="18" height="20" viewBox="0 0 18 20"><path d="M1,3 L6,2 L6,19.5 L1,17.5 Z" fill="#e9c558"/><path d="M2.5,3 L10.5,3 L10.5,8.5 L12.5,9.5 L12.5,17 L2.5,17 Z" fill="#f9da7a"/><path d="M1,3 L4,4.2 L4,19.8 L1,17.5 Z" fill="#fde7a0"/><rect x="6" y="5" width="11" height="14" fill="#3a3a3a"/><rect x="8.500" y="6.500" width="6" height="5" fill="#d8a040"/><rect x="8.500" y="12.500" width="6" height="5" fill="#5a9a50"/></svg>
<span class="t" style="left:463.00px;top:838.50px;font-size:15px;line-height:18px;color:#000;letter-spacing:-0.119px;">Videos</span>
<div class="b" style="left:398px;top:862px;width:175px;height:25px;background:#d9d9d9;"></div>
<svg class="b" style="left:436px;top:870px;" width="22" height="18" viewBox="0 0 22 18"><path d="M1,1 h3.500 v3.500 h-3.500 Z M5.500,1 h3.500 v3.500 h-3.500 Z M1,5.500 h3.500 v3.500 h-3.500 Z M5.500,5.500 h3.500 v3.500 h-3.500 Z" fill="#1e90e6"/><path d="M3,13 L8,10 L20,12 L20,15 L8,17.500 L3,15.500 Z" fill="#c8ccd0"/><path d="M3,13 L8,10 L20,12 L14,14.500 Z" fill="#e8eaec"/></svg>
<span class="t" style="left:463.00px;top:868.50px;font-size:15px;line-height:18px;color:#000;letter-spacing:-0.972px;">OS (C:)</span>
<div class="b" style="left:573px;top:302px;width:19px;height:585px;background:#f0f0f0;"></div>
<div class="b" style="left:573px;top:323px;width:19px;height:469px;background:#cdcdcd;"></div>
<svg class="b" style="left:576px;top:308px;" width="13" height="9" viewBox="0 0 13 9"><path d="M1.500,7.500 L6.500,2 L11.500,7.500" fill="none" stroke="#505050" stroke-width="1.6"/></svg>
<svg class="b" style="left:576px;top:872px;" width="13" height="9" viewBox="0 0 13 9"><path d="M1.500,1.500 L6.500,7 L11.500,1.500" fill="none" stroke="#505050" stroke-width="1.6"/></svg>
<span class="t" style="left:619.00px;top:309.50px;font-size:15px;line-height:18px;color:#4c607a;letter-spacing:-0.005px;">Name</span>
<span class="t" style="left:945.00px;top:309.50px;font-size:15px;line-height:18px;color:#4c607a;letter-spacing:0.287px;">Date modified</span>
<span class="t" style="left:1095.00px;top:309.50px;font-size:15px;line-height:18px;color:#4c607a;letter-spacing:-0.507px;">Type</span>
<span class="t" style="left:1245.00px;top:309.50px;font-size:15px;line-height:18px;color:#4c607a;letter-spacing:-0.727px;">Size</span>
<div class="b" style="left:937px;top:302px;width:1px;height:32px;background:#e5e5e5;"></div>
<div class="b" style="left:1087px;top:302px;width:1px;height:32px;background:#e5e5e5;"></div>
<div class="b" style="left:1237px;top:302px;width:1px;height:32px;background:#e5e5e5;"></div>
<svg class="b" style="left:769px;top:303px;" width="10" height="6" viewBox="0 0 10 6"><path d="M1,5 L5,1 L9,5" fill="none" stroke="#8a8a8a" stroke-width="1"/></svg>
<div class="b" style="left:600px;top:335px;width:726px;height:531px;overflow:hidden;"><svg class="b" style="left:23px;top:10.5px" width="16" height="19" viewBox="0 0 16 19"><path d="M1.5,1.5 L10.5,1.5 L14.5,5 L14.5,17.5 L1.5,17.5 Z" fill="#fff" stroke="#8a8a8a" stroke-width="1"/><path d="M10.5,1.5 L10.5,5 L14.5,5" fill="none" stroke="#8a8a8a" stroke-width="1"/><path d="M3.5,5.5 H9 M3.5,7.5 H12.5 M3.5,9.5 H12.5 M3.5,11.5 H12.5 M3.5,13.5 H12.5 M3.5,15.5 H12.5" stroke="#9a9a9a" stroke-width="1"/></svg><span class="t" style="left:46.00px;top:13.00px;font-size:15px;line-height:18px;color:#000;letter-spacing:-0.079px;">comsolnet1</span><span class="t" style="left:345.00px;top:13.00px;font-size:15px;line-height:18px;color:#6d6d6d;letter-spacing:-0.119px;">01/01/2018 21:51</span><span class="t" style="left:495.00px;top:13.00px;font-size:15px;line-height:18px;color:#6d6d6d;letter-spacing:-0.004px;">Text Document</span><span class="t" style="left:698.98px;top:13.00px;font-size:15px;line-height:18px;color:#6d6d6d;">1 KB</span><svg class="b" style="left:23px;top:37.5px" width="16" height="19" viewBox="0 0 16 19"><path d="M1.5,1.5 L10.5,1.5 L14.5,5 L14.5,17.5 L1.5,17.5 Z" fill="#fff" stroke="#8a8a8a" stroke-width="1"/><path d="M10.5,1.5 L10.5,5 L14.5,5" fill="none" stroke="#8a8a8a" stroke-width="1"/><path d="M3.5,5.5 H9 M3.5,7.5 H12.5 M3.5,9.5 H12.5 M3.5,11.5 H12.5 M3.5,13.5 H12.5 M3.5,15.5 H12.5" stroke="#9a9a9a" stroke-width="1"/></svg><span class="t" style="left:46.00px;top:40.00px;font-size:15px;line-height:18px;color:#000;letter-spacing:-0.151px;">comsolnet1_render</span><span class="t" style="left:345.00px;top:40.00px;font-size:15px;line-height:18px;color:#6d6d6d;letter-spacing:-0.119px;">01/01/2018 21:51</span><span class="t" style="left:495.00px;top:40.00px;font-size:15px;line-height:18px;color:#6d6d6d;letter-spacing:-0.004px;">Text Document</span><span class="t" style="left:698.98px;top:40.00px;font-size:15px;line-height:18px;color:#6d6d6d;">0 KB</span><svg class="b" style="left:23px;top:64.5px" width="16" height="19" viewBox="0 0 16 19"><path d="M1.5,1.5 L10.5,1.5 L14.5,5 L14.5,17.5 L1.5,17.5 Z" fill="#fff" stroke="#8a8a8a" stroke-width="1"/><path d="M10.5,1.5 L10.5,5 L14.5,5" fill="none" stroke="#8a8a8a" stroke-width="1"/><path d="M3.5,5.5 H9 M3.5,7.5 H12.5 M3.5,9.5 H12.5 M3.5,11.5 H12.5 M3.5,13.5 H12.5 M3.5,15.5 H12.5" stroke="#9a9a9a" stroke-width="1"/></svg><span class="t" style="left:46.00px;top:67.00px;font-size:15px;line-height:18px;color:#000;letter-spacing:-0.079px;">comsolnet2</span><span class="t" style="left:345.00px;top:67.00px;font-size:15px;line-height:18px;color:#6d6d6d;letter-spacing:-0.119px;">31/12/2017 20:15</span><span class="t" style="left:495.00px;top:67.00px;font-size:15px;line-height:18px;color:#6d6d6d;letter-spacing:-0.004px;">Text Document</span><span class="t" style="left:698.98px;top:67.00px;font-size:15px;line-height:18px;color:#6d6d6d;">1 KB</span><svg class="b" style="left:23px;top:91.5px" width="16" height="19" viewBox="0 0 16 19"><path d="M1.5,1.5 L10.5,1.5 L14.5,5 L14.5,17.5 L1.5,17.5 Z" fill="#fff" stroke="#8a8a8a" stroke-width="1"/><path d="M10.5,1.5 L10.5,5 L14.5,5" fill="none" stroke="#8a8a8a" stroke-width="1"/><path d="M3.5,5.5 H9 M3.5,7.5 H12.5 M3.5,9.5 H12.5 M3.5,11.5 H12.5 M3.5,13.5 H12.5 M3.5,15.5 H12.5" stroke="#9a9a9a" stroke-width="1"/></svg><span class="t" style="left:46.00px;top:94.00px;font-size:15px;line-height:18px;color:#000;letter-spacing:-0.151px;">comsolnet2_render</span><span class="t" style="left:345.00px;top:94.00px;font-size:15px;line-height:18px;color:#6d6d6d;letter-spacing:-0.119px;">31/12/2017 20:15</span><span class="t" style="left:495.00px;top:94.00px;font-size:15px;line-height:18px;color:#6d6d6d;letter-spacing:-0.004px;">Text Document</span><span class="t" style="left:690.64px;top:94.00px;font-size:15px;line-height:18px;color:#6d6d6d;">47 KB</span><svg class="b" style="left:23px;top:118.5px" width="16" height="19" viewBox="0 0 16 19"><path d="M1.5,1.5 L10.5,1.5 L14.5,5 L14.5,17.5 L1.5,17.5 Z" fill="#fff" stroke="#8a8a8a" stroke-width="1"/><path d="M10.5,1.5 L10.5,5 L14.5,5" fill="none" stroke="#8a8a8a" stroke-width="1"/><path d="M3.5,5.5 H9 M3.5,7.5 H12.5 M3.5,9.5 H12.5 M3.5,11.5 H12.5 M3.5,13.5 H12.5 M3.5,15.5 H12.5" stroke="#9a9a9a" stroke-width="1"/></svg><span class="t" style="left:46.00px;top:121.00px;font-size:15px;line-height:18px;color:#000;letter-spacing:-0.079px;">comsolnet3</span><span class="t" style="left:345.00px;top:121.00px;font-size:15px;line-height:18px;color:#6d6d6d;letter-spacing:-0.119px;">31/12/2017 20:26</span><span class="t" style="left:495.00px;top:121.00px;font-size:15px;line-height:18px;color:#6d6d6d;letter-spacing:-0.004px;">Text Document</span><span class="t" style="left:698.98px;top:121.00px;font-size:15px;line-height:18px;color:#6d6d6d;">1 KB</span><svg class="b" style="left:23px;top:145.5px" width="16" height="19" viewBox="0 0 16 19"><path d="M1.5,1.5 L10.5,1.5 L14.5,5 L14.5,17.5 L1.5,17.5 Z" fill="#fff" stroke="#8a8a8a" stroke-width="1"/><path d="M10.5,1.5 L10.5,5 L14.5,5" fill="none" stroke="#8a8a8a" stroke-width="1"/><path d="M3.5,5.5 H9 M3.5,7.5 H12.5 M3.5,9.5 H12.5 M3.5,11.5 H12.5 M3.5,13.5 H12.5 M3.5,15.5 H12.5" stroke="#9a9a9a" stroke-width="1"/></svg><span class="t" style="left:46.00px;top:148.00px;font-size:15px;line-height:18px;color:#000;letter-spacing:-0.151px;">comsolnet3_render</span><span class="t" style="left:345.00px;top:148.00px;font-size:15px;line-height:18px;color:#6d6d6d;letter-spacing:-0.119px;">31/12/2017 20:26</span><span class="t" style="left:495.00px;top:148.00px;font-size:15px;line-height:18px;color:#6d6d6d;letter-spacing:-0.004px;">Text Document</span><span class="t" style="left:690.64px;top:148.00px;font-size:15px;line-height:18px;color:#6d6d6d;">47 KB</span><svg class="b" style="left:23px;top:172.5px" width="16" height="19" viewBox="0 0 16 19"><path d="M1.5,1.5 L10.5,1.5 L14.5,5 L14.5,17.5 L1.5,17.5 Z" fill="#fff" stroke="#8a8a8a" stroke-width="1"/><path d="M10.5,1.5 L10.5,5 L14.5,5" fill="none" stroke="#8a8a8a" stroke-width="1"/><path d="M3.5,5.5 H9 M3.5,7.5 H12.5 M3.5,9.5 H12.5 M3.5,11.5 H12.5 M3.5,13.5 H12.5 M3.5,15.5 H12.5" stroke="#9a9a9a" stroke-width="1"/></svg><span class="t" style="left:46.00px;top:175.00px;font-size:15px;line-height:18px;color:#000;letter-spacing:-0.079px;">comsolnet4</span><span class="t" style="left:345.00px;top:175.00px;font-size:15px;line-height:18px;color:#6d6d6d;letter-spacing:-0.119px;">31/12/2017 20:28</span><span class="t" style="left:495.00px;top:175.00px;font-size:15px;line-height:18px;color:#6d6d6d;letter-spacing:-0.004px;">Text Document</span><span class="t" style="left:698.98px;top:175.00px;font-size:15px;line-height:18px;color:#6d6d6d;">1 KB</span><svg class="b" style="left:23px;top:199.5px" width="16" height="19" viewBox="0 0 16 19"><path d="M1.5,1.5 L10.5,1.5 L14.5,5 L14.5,17.5 L1.5,17.5 Z" fill="#fff" stroke="#8a8a8a" stroke-width="1"/><path d="M10.5,1.5 L10.5,5 L14.5,5" fill="none" stroke="#8a8a8a" stroke-width="1"/><path d="M3.5,5.5 H9 M3.5,7.5 H12.5 M3.5,9.5 H12.5 M3.5,11.5 H12.5 M3.5,13.5 H12.5 M3.5,15.5 H12.5" stroke="#9a9a9a" stroke-width="1"/></svg><span class="t" style="left:46.00px;top:202.00px;font-size:15px;line-height:18px;color:#000;letter-spacing:-0.151px;">comsolnet4_render</span><span class="t" style="left:345.00px;top:202.00px;font-size:15px;line-height:18px;color:#6d6d6d;letter-spacing:-0.119px;">31/12/2017 20:28</span><span class="t" style="left:495.00px;top:202.00px;font-size:15px;line-height:18px;color:#6d6d6d;letter-spacing:-0.004px;">Text Document</span><span class="t" style="left:690.64px;top:202.00px;font-size:15px;line-height:18px;color:#6d6d6d;">47 KB</span><svg class="b" style="left:23px;top:226.5px" width="16" height="19" viewBox="0 0 16 19"><path d="M1.5,1.5 L10.5,1.5 L14.5,5 L14.5,17.5 L1.5,17.5 Z" fill="#fff" stroke="#8a8a8a" stroke-width="1"/><path d="M10.5,1.5 L10.5,5 L14.5,5" fill="none" stroke="#8a8a8a" stroke-width="1"/><path d="M3.5,5.5 H9 M3.5,7.5 H12.5 M3.5,9.5 H12.5 M3.5,11.5 H12.5 M3.5,13.5 H12.5 M3.5,15.5 H12.5" stroke="#9a9a9a" stroke-width="1"/></svg><span class="t" style="left:46.00px;top:229.00px;font-size:15px;line-height:18px;color:#000;letter-spacing:-0.079px;">comsolnet5</span><span class="t" style="left:345.00px;top:229.00px;font-size:15px;line-height:18px;color:#6d6d6d;letter-spacing:-0.119px;">31/12/2017 20:34</span><span class="t" style="left:495.00px;top:229.00px;font-size:15px;line-height:18px;color:#6d6d6d;letter-spacing:-0.004px;">Text Document</span><span class="t" style="left:698.98px;top:229.00px;font-size:15px;line-height:18px;color:#6d6d6d;">1 KB</span><svg class="b" style="left:23px;top:253.5px" width="16" height="19" viewBox="0 0 16 19"><path d="M1.5,1.5 L10.5,1.5 L14.5,5 L14.5,17.5 L1.5,17.5 Z" fill="#fff" stroke="#8a8a8a" stroke-width="1"/><path d="M10.5,1.5 L10.5,5 L14.5,5" fill="none" stroke="#8a8a8a" stroke-width="1"/><path d="M3.5,5.5 H9 M3.5,7.5 H12.5 M3.5,9.5 H12.5 M3.5,11.5 H12.5 M3.5,13.5 H12.5 M3.5,15.5 H12.5" stroke="#9a9a9a" stroke-width="1"/></svg><span class="t" style="left:46.00px;top:256.00px;font-size:15px;line-height:18px;color:#000;letter-spacing:-0.151px;">comsolnet5_render</span><span class="t" style="left:345.00px;top:256.00px;font-size:15px;line-height:18px;color:#6d6d6d;letter-spacing:-0.119px;">31/12/2017 20:34</span><span class="t" style="left:495.00px;top:256.00px;font-size:15px;line-height:18px;color:#6d6d6d;letter-spacing:-0.004px;">Text Document</span><span class="t" style="left:690.64px;top:256.00px;font-size:15px;line-height:18px;color:#6d6d6d;">47 KB</span><svg class="b" style="left:23px;top:280.5px" width="16" height="19" viewBox="0 0 16 19"><path d="M1.5,1.5 L10.5,1.5 L14.5,5 L14.5,17.5 L1.5,17.5 Z" fill="#fff" stroke="#8a8a8a" stroke-width="1"/><path d="M10.5,1.5 L10.5,5 L14.5,5" fill="none" stroke="#8a8a8a" stroke-width="1"/><path d="M3.5,5.5 H9 M3.5,7.5 H12.5 M3.5,9.5 H12.5 M3.5,11.5 H12.5 M3.5,13.5 H12.5 M3.5,15.5 H12.5" stroke="#9a9a9a" stroke-width="1"/></svg><span class="t" style="left:46.00px;top:283.00px;font-size:15px;line-height:18px;color:#000;letter-spacing:-0.079px;">comsolnet6</span><span class="t" style="left:345.00px;top:283.00px;font-size:15px;line-height:18px;color:#6d6d6d;letter-spacing:-0.119px;">31/12/2017 20:42</span><span class="t" style="left:495.00px;top:283.00px;font-size:15px;line-height:18px;color:#6d6d6d;letter-spacing:-0.004px;">Text Document</span><span class="t" style="left:698.98px;top:283.00px;font-size:15px;line-height:18px;color:#6d6d6d;">1 KB</span><svg class="b" style="left:23px;top:307.5px" width="16" height="19" viewBox="0 0 16 19"><path d="M1.5,1.5 L10.5,1.5 L14.5,5 L14.5,17.5 L1.5,17.5 Z" fill="#fff" stroke="#8a8a8a" stroke-width="1"/><path d="M10.5,1.5 L10.5,5 L14.5,5" fill="none" stroke="#8a8a8a" stroke-width="1"/><path d="M3.5,5.5 H9 M3.5,7.5 H12.5 M3.5,9.5 H12.5 M3.5,11.5 H12.5 M3.5,13.5 H12.5 M3.5,15.5 H12.5" stroke="#9a9a9a" stroke-width="1"/></svg><span class="t" style="left:46.00px;top:310.00px;font-size:15px;line-height:18px;color:#000;letter-spacing:-0.151px;">comsolnet6_render</span><span class="t" style="left:345.00px;top:310.00px;font-size:15px;line-height:18px;color:#6d6d6d;letter-spacing:-0.119px;">31/12/2017 20:42</span><span class="t" style="left:495.00px;top:310.00px;font-size:15px;line-height:18px;color:#6d6d6d;letter-spacing:-0.004px;">Text Document</span><span class="t" style="left:690.64px;top:310.00px;font-size:15px;line-height:18px;color:#6d6d6d;">47 KB</span><svg class="b" style="left:23px;top:334.5px" width="16" height="19" viewBox="0 0 16 19"><path d="M1.5,1.5 L10.5,1.5 L14.5,5 L14.5,17.5 L1.5,17.5 Z" fill="#fff" stroke="#8a8a8a" stroke-width="1"/><path d="M10.5,1.5 L10.5,5 L14.5,5" fill="none" stroke="#8a8a8a" stroke-width="1"/><path d="M3.5,5.5 H9 M3.5,7.5 H12.5 M3.5,9.5 H12.5 M3.5,11.5 H12.5 M3.5,13.5 H12.5 M3.5,15.5 H12.5" stroke="#9a9a9a" stroke-width="1"/></svg><span class="t" style="left:46.00px;top:337.00px;font-size:15px;line-height:18px;color:#000;letter-spacing:-0.079px;">comsolnet7</span><span class="t" style="left:345.00px;top:337.00px;font-size:15px;line-height:18px;color:#6d6d6d;letter-spacing:-0.119px;">31/12/2017 23:28</span><span class="t" style="left:495.00px;top:337.00px;font-size:15px;line-height:18px;color:#6d6d6d;letter-spacing:-0.004px;">Text Document</span><span class="t" style="left:698.98px;top:337.00px;font-size:15px;line-height:18px;color:#6d6d6d;">1 KB</span><svg class="b" style="left:23px;top:361.5px" width="16" height="19" viewBox="0 0 16 19"><path d="M1.5,1.5 L10.5,1.5 L14.5,5 L14.5,17.5 L1.5,17.5 Z" fill="#fff" stroke="#8a8a8a" stroke-width="1"/><path d="M10.5,1.5 L10.5,5 L14.5,5" fill="none" stroke="#8a8a8a" stroke-width="1"/><path d="M3.5,5.5 H9 M3.5,7.5 H12.5 M3.5,9.5 H12.5 M3.5,11.5 H12.5 M3.5,13.5 H12.5 M3.5,15.5 H12.5" stroke="#9a9a9a" stroke-width="1"/></svg><span class="t" style="left:46.00px;top:364.00px;font-size:15px;line-height:18px;color:#000;letter-spacing:-0.151px;">comsolnet7_render</span><span class="t" style="left:345.00px;top:364.00px;font-size:15px;line-height:18px;color:#6d6d6d;letter-spacing:-0.119px;">31/12/2017 23:29</span><span class="t" style="left:495.00px;top:364.00px;font-size:15px;line-height:18px;color:#6d6d6d;letter-spacing:-0.004px;">Text Document</span><span class="t" style="left:690.64px;top:364.00px;font-size:15px;line-height:18px;color:#6d6d6d;">47 KB</span><svg class="b" style="left:23px;top:388.5px" width="16" height="19" viewBox="0 0 16 19"><path d="M1.5,1.5 L10.5,1.5 L14.5,5 L14.5,17.5 L1.5,17.5 Z" fill="#fff" stroke="#8a8a8a" stroke-width="1"/><path d="M10.5,1.5 L10.5,5 L14.5,5" fill="none" stroke="#8a8a8a" stroke-width="1"/><path d="M3.5,5.5 H9 M3.5,7.5 H12.5 M3.5,9.5 H12.5 M3.5,11.5 H12.5 M3.5,13.5 H12.5 M3.5,15.5 H12.5" stroke="#9a9a9a" stroke-width="1"/></svg><span class="t" style="left:46.00px;top:391.00px;font-size:15px;line-height:18px;color:#000;letter-spacing:-0.079px;">comsolnet8</span><span class="t" style="left:345.00px;top:391.00px;font-size:15px;line-height:18px;color:#6d6d6d;letter-spacing:-0.119px;">01/01/2018 19:12</span><span class="t" style="left:495.00px;top:391.00px;font-size:15px;line-height:18px;color:#6d6d6d;letter-spacing:-0.004px;">Text Document</span><span class="t" style="left:698.98px;top:391.00px;font-size:15px;line-height:18px;color:#6d6d6d;">1 KB</span><svg class="b" style="left:23px;top:415.5px" width="16" height="19" viewBox="0 0 16 19"><path d="M1.5,1.5 L10.5,1.5 L14.5,5 L14.5,17.5 L1.5,17.5 Z" fill="#fff" stroke="#8a8a8a" stroke-width="1"/><path d="M10.5,1.5 L10.5,5 L14.5,5" fill="none" stroke="#8a8a8a" stroke-width="1"/><path d="M3.5,5.5 H9 M3.5,7.5 H12.5 M3.5,9.5 H12.5 M3.5,11.5 H12.5 M3.5,13.5 H12.5 M3.5,15.5 H12.5" stroke="#9a9a9a" stroke-width="1"/></svg><span class="t" style="left:46.00px;top:418.00px;font-size:15px;line-height:18px;color:#000;letter-spacing:-0.151px;">comsolnet8_render</span><span class="t" style="left:345.00px;top:418.00px;font-size:15px;line-height:18px;color:#6d6d6d;letter-spacing:-0.119px;">01/01/2018 19:12</span><span class="t" style="left:495.00px;top:418.00px;font-size:15px;line-height:18px;color:#6d6d6d;letter-spacing:-0.004px;">Text Document</span><span class="t" style="left:690.64px;top:418.00px;font-size:15px;line-height:18px;color:#6d6d6d;">47 KB</span><svg class="b" style="left:23px;top:442.5px" width="16" height="19" viewBox="0 0 16 19"><path d="M1.5,1.5 L10.5,1.5 L14.5,5 L14.5,17.5 L1.5,17.5 Z" fill="#fff" stroke="#8a8a8a" stroke-width="1"/><path d="M10.5,1.5 L10.5,5 L14.5,5" fill="none" stroke="#8a8a8a" stroke-width="1"/><path d="M3.5,5.5 H9 M3.5,7.5 H12.5 M3.5,9.5 H12.5 M3.5,11.5 H12.5 M3.5,13.5 H12.5 M3.5,15.5 H12.5" stroke="#9a9a9a" stroke-width="1"/></svg><span class="t" style="left:46.00px;top:445.00px;font-size:15px;line-height:18px;color:#000;letter-spacing:-0.079px;">comsolnet9</span><span class="t" style="left:345.00px;top:445.00px;font-size:15px;line-height:18px;color:#6d6d6d;letter-spacing:-0.119px;">01/01/2018 19:16</span><span class="t" style="left:495.00px;top:445.00px;font-size:15px;line-height:18px;color:#6d6d6d;letter-spacing:-0.004px;">Text Document</span><span class="t" style="left:698.98px;top:445.00px;font-size:15px;line-height:18px;color:#6d6d6d;">1 KB</span><svg class="b" style="left:23px;top:469.5px" width="16" height="19" viewBox="0 0 16 19"><path d="M1.5,1.5 L10.5,1.5 L14.5,5 L14.5,17.5 L1.5,17.5 Z" fill="#fff" stroke="#8a8a8a" stroke-width="1"/><path d="M10.5,1.5 L10.5,5 L14.5,5" fill="none" stroke="#8a8a8a" stroke-width="1"/><path d="M3.5,5.5 H9 M3.5,7.5 H12.5 M3.5,9.5 H12.5 M3.5,11.5 H12.5 M3.5,13.5 H12.5 M3.5,15.5 H12.5" stroke="#9a9a9a" stroke-width="1"/></svg><span class="t" style="left:46.00px;top:472.00px;font-size:15px;line-height:18px;color:#000;letter-spacing:-0.151px;">comsolnet9_render</span><span class="t" style="left:345.00px;top:472.00px;font-size:15px;line-height:18px;color:#6d6d6d;letter-spacing:-0.119px;">01/01/2018 19:16</span><span class="t" style="left:495.00px;top:472.00px;font-size:15px;line-height:18px;color:#6d6d6d;letter-spacing:-0.004px;">Text Document</span><span class="t" style="left:690.64px;top:472.00px;font-size:15px;line-height:18px;color:#6d6d6d;">47 KB</span><svg class="b" style="left:23px;top:496.5px" width="16" height="19" viewBox="0 0 16 19"><path d="M1.5,1.5 L10.5,1.5 L14.5,5 L14.5,17.5 L1.5,17.5 Z" fill="#fff" stroke="#8a8a8a" stroke-width="1"/><path d="M10.5,1.5 L10.5,5 L14.5,5" fill="none" stroke="#8a8a8a" stroke-width="1"/><path d="M3.5,5.5 H9 M3.5,7.5 H12.5 M3.5,9.5 H12.5 M3.5,11.5 H12.5 M3.5,13.5 H12.5 M3.5,15.5 H12.5" stroke="#9a9a9a" stroke-width="1"/></svg><span class="t" style="left:46.00px;top:499.00px;font-size:15px;line-height:18px;color:#000;letter-spacing:-0.055px;">comsolnet10</span><span class="t" style="left:345.00px;top:499.00px;font-size:15px;line-height:18px;color:#6d6d6d;letter-spacing:-0.119px;">01/01/2018 19:16</span><span class="t" style="left:495.00px;top:499.00px;font-size:15px;line-height:18px;color:#6d6d6d;letter-spacing:-0.004px;">Text Document</span><span class="t" style="left:698.98px;top:499.00px;font-size:15px;line-height:18px;color:#6d6d6d;">1 KB</span><svg class="b" style="left:23px;top:523.5px" width="16" height="19" viewBox="0 0 16 19"><path d="M1.5,1.5 L10.5,1.5 L14.5,5 L14.5,17.5 L1.5,17.5 Z" fill="#fff" stroke="#8a8a8a" stroke-width="1"/><path d="M10.5,1.5 L10.5,5 L14.5,5" fill="none" stroke="#8a8a8a" stroke-width="1"/><path d="M3.5,5.5 H9 M3.5,7.5 H12.5 M3.5,9.5 H12.5 M3.5,11.5 H12.5 M3.5,13.5 H12.5 M3.5,15.5 H12.5" stroke="#9a9a9a" stroke-width="1"/></svg><span class="t" style="left:46.00px;top:526.00px;font-size:15px;line-height:18px;color:#000;letter-spacing:-0.162px;">comsolnet10_render</span><span class="t" style="left:345.00px;top:526.00px;font-size:15px;line-height:18px;color:#6d6d6d;letter-spacing:-0.119px;">01/01/2018 19:16</span><span class="t" style="left:495.00px;top:526.00px;font-size:15px;line-height:18px;color:#6d6d6d;letter-spacing:-0.004px;">Text Document</span><span class="t" style="left:690.64px;top:526.00px;font-size:15px;line-height:18px;color:#6d6d6d;">47 KB</span></div>
<div class="b" style="left:1326px;top:302px;width:19px;height:565px;background:#f0f0f0;"></div>
<div class="b" style="left:1326px;top:323px;width:19px;height:342px;background:#a6a6a6;"></div>
<svg class="b" style="left:1329px;top:308px;" width="13" height="9" viewBox="0 0 13 9"><path d="M1.500,7.500 L6.500,2 L11.500,7.500" fill="none" stroke="#505050" stroke-width="1.6"/></svg>
<svg class="b" style="left:1329px;top:850px;" width="13" height="9" viewBox="0 0 13 9"><path d="M1.500,1.500 L6.500,7 L11.500,1.500" fill="none" stroke="#505050" stroke-width="1.6"/></svg>
<div class="b" style="left:598px;top:867px;width:727px;height:20px;background:#f0f0f0;"></div>
<div class="b" style="left:619px;top:867px;width:661px;height:20px;background:#cdcdcd;"></div>
<svg class="b" style="left:603px;top:871px;" width="9" height="12" viewBox="0 0 9 12"><path d="M7,1.500 L2,6 L7,10.500" fill="none" stroke="#505050" stroke-width="1.6"/></svg>
<svg class="b" style="left:1309px;top:871px;" width="9" height="12" viewBox="0 0 9 12"><path d="M2,1.500 L7,6 L2,10.500" fill="none" stroke="#505050" stroke-width="1.6"/></svg>
<span class="t" style="left:415.00px;top:892.50px;font-size:15px;line-height:18px;color:#1e3a5f;letter-spacing:-0.099px;">30 items</span>
<div class="b" style="left:484px;top:893px;width:1px;height:17px;background:#f0f0f0;"></div>
<div class="b" style="left:1285px;top:887px;width:28px;height:29px;background:#cce8f6;border:1.5px solid #2a9bd8;"></div>
<svg class="b" style="left:1291px;top:893px;" width="18" height="18" viewBox="0 0 18 18"><rect x="0.500" y="0.500" width="5" height="15" fill="#fff" stroke="#9a9a9a"/><rect x="2" y="2.500" width="2" height="2" fill="#3a7ac8"/><rect x="2" y="7" width="2" height="2" fill="#c8a030"/><rect x="2" y="11.500" width="2" height="2" fill="#c83030"/><path d="M7.500,3.500 h4 M13,3.500 h4 M7.500,8 h4 M13,8 h4 M7.500,12.500 h4 M13,12.500 h4" stroke="#777" stroke-width="1.2"/></svg>
<svg class="b" style="left:1318px;top:894px;" width="18" height="14" viewBox="0 0 18 14"><rect x="0.500" y="0.500" width="17" height="13" fill="#fff" stroke="#9a9a9a"/><rect x="2.500" y="2.500" width="13" height="9" fill="#6aa8d8"/><path d="M2.500,11.500 v-4 q4,-3 7,0 t6,1 v3 Z" fill="#3a6a4a"/><rect x="2.500" y="10" width="13" height="1.500" fill="#2a5a9a"/></svg>
<div class="b" style="left:1389px;top:784px;width:501px;height:237px;background:#fff;box-shadow:0 0 12px rgba(0,0,0,.5);"></div>
<div class="b" style="left:1389px;top:822px;width:501px;height:170px;background:linear-gradient(180deg,#3f8fb0 0%,#2f7fa3 20%,#1f6f96 60%,#176a93 100%);"></div>
<svg class="b" style="left:1389px;top:822px;" width="501" height="170" viewBox="0 0 501 170"><path d="M0,8 Q200,-10 501,2 V0 H0 Z" fill="#9ccbe0" opacity=".55"/><path d="M0,30 Q120,0 320,0 L200,0 Q80,6 0,22 Z" fill="#b9dcea" opacity=".5"/><path d="M0,70 Q60,30 200,10 L140,12 Q50,30 0,58 Z" fill="#8fc3da" opacity=".35"/></svg>
<div class="b" style="left:1389px;top:992px;width:501px;height:29px;background:linear-gradient(180deg,#cfe3f4 0%,#b4d1ec 45%,#9fc1e2 100%);"></div>
<svg class="b" style="left:1398px;top:792px;" width="20" height="20" viewBox="0 0 20 20"><circle cx="10" cy="10" r="9.500" fill="#d8dde2" stroke="#8a9198"/><path d="M2,9 Q7,2 14,5" fill="none" stroke="#3f9a3a" stroke-width="2.400"/><path d="M7,7 q6,3 3,11" fill="none" stroke="#2a5aa8" stroke-width="2.200"/><path d="M12,9 q4,3 6,2" fill="none" stroke="#2a5aa8" stroke-width="1.800"/></svg>
<span class="t" style="left:1424.00px;top:793.50px;font-size:15px;line-height:18px;color:#7a7a7a;letter-spacing:-0.126px;">Cisco AnyConnect Secure Mobility Client</span>
<svg class="b" style="left:1730px;top:790px;" width="150" height="26" viewBox="0 0 150 26"><path d="M7,13.500 H19" stroke="#777" stroke-width="1.200"/><rect x="65.500" y="7.500" width="11" height="11" fill="none" stroke="#e2e2e2" stroke-width="1.200"/><path d="M124,7 L136,19 M136,7 L124,19" stroke="#444" stroke-width="1.300"/></svg>
<div class="b" style="left:1404px;top:837px;width:471px;height:113px;background:#f0f0f0;"></div>
<div class="b" style="left:1404px;top:950px;width:471px;height:27px;background:#cfcfcf;"></div>
<svg class="b" style="left:1426px;top:846px;" width="70" height="76" viewBox="0 0 70 76"><defs><linearGradient id="lk" x1="0" y1="0" x2="0" y2="1"><stop offset="0" stop-color="#e6b25a"/><stop offset=".5" stop-color="#d89a3c"/><stop offset="1" stop-color="#c98a32"/></linearGradient><linearGradient id="sh" x1="0" y1="0" x2="1" y2="0"><stop offset="0" stop-color="#8a8a8a"/><stop offset=".4" stop-color="#f2f2f2"/><stop offset="1" stop-color="#8a8a8a"/></linearGradient></defs><path d="M14,36 V22 a16,16 0 0 1 32,0 V36" fill="none" stroke="url(#sh)" stroke-width="8"/><rect x="3" y="34" width="54" height="36" rx="3" fill="url(#lk)"/><rect x="3" y="34" width="54" height="3" rx="2" fill="#f3cd86"/><rect x="4" y="42" width="52" height="1.200" fill="#b97a28" opacity=".6"/><rect x="4" y="47" width="52" height="1.200" fill="#b97a28" opacity=".6"/><rect x="4" y="52" width="52" height="1.200" fill="#b97a28" opacity=".6"/><rect x="4" y="57" width="52" height="1.200" fill="#b97a28" opacity=".6"/><rect x="4" y="62" width="52" height="1.200" fill="#b97a28" opacity=".6"/><rect x="5" y="69" width="50" height="3" fill="#000" opacity=".25"/><circle cx="51" cy="14" r="13.500" fill="#2f8a2a" stroke="#e8f0e8" stroke-width="1.500"/><path d="M44,14 L49.500,19.500 L58,8.500" fill="none" stroke="#fff" stroke-width="3.200"/></svg>
<span class="t" style="left:1511.00px;top:853.00px;font-size:14px;line-height:17px;color:#000;letter-spacing:-0.817px;font-weight:bold;">VPN:</span>
<span class="t" style="left:1511.00px;top:874.00px;font-size:14px;line-height:17px;color:#000;letter-spacing:0.014px;">Connected to vpn2.net.ed.ac.uk.</span>
<div class="b" style="left:1512px;top:911px;width:219px;height:25px;background:#fff;border:1px solid #adadad;"></div>
<div class="b" style="left:1515px;top:914px;width:191px;height:19px;background:#ececec;"></div>
<span class="t" style="left:1518.00px;top:915.00px;font-size:14px;line-height:17px;color:#6d6d6d;letter-spacing:0.155px;">vpn2.net.ed.ac.uk</span>
<svg class="b" style="left:1713px;top:919px;" width="13" height="9" viewBox="0 0 13 9"><path d="M1.500,1.500 L6.500,7 L11.500,1.500" fill="none" stroke="#777" stroke-width="1.300"/></svg>
<div class="b" style="left:1741px;top:910px;width:120px;height:26px;background:#e1e1e1;border:1px solid #adadad;"></div>
<span class="t" style="left:1767.50px;top:915.00px;font-size:14px;line-height:17px;color:#000;letter-spacing:-0.362px;">Disconnect</span>
<span class="t" style="left:1417.00px;top:955.00px;font-size:14px;line-height:17px;color:#6d6d6d;letter-spacing:0.072px;">02:35:25</span>
<span class="t" style="left:1829.00px;top:955.00px;font-size:14px;line-height:17px;color:#6d6d6d;letter-spacing:-0.005px;">IPv4</span>
<svg class="b" style="left:1411px;top:996px;" width="22" height="22" viewBox="0 0 22 22"><g transform="translate(11,11)"><rect x="-2" y="-10.500" width="4" height="5" fill="#1f5f9a" transform="rotate(0)"/><rect x="-2" y="-10.500" width="4" height="5" fill="#1f5f9a" transform="rotate(45)"/><rect x="-2" y="-10.500" width="4" height="5" fill="#1f5f9a" transform="rotate(90)"/><rect x="-2" y="-10.500" width="4" height="5" fill="#1f5f9a" transform="rotate(135)"/><rect x="-2" y="-10.500" width="4" height="5" fill="#1f5f9a" transform="rotate(180)"/><rect x="-2" y="-10.500" width="4" height="5" fill="#1f5f9a" transform="rotate(225)"/><rect x="-2" y="-10.500" width="4" height="5" fill="#1f5f9a" transform="rotate(270)"/><rect x="-2" y="-10.500" width="4" height="5" fill="#1f5f9a" transform="rotate(315)"/><circle r="6.800" fill="none" stroke="#1f5f9a" stroke-width="3.200"/></g></svg>
<svg class="b" style="left:1448px;top:997px;" width="20" height="20" viewBox="0 0 20 20"><circle cx="10" cy="10" r="8.800" fill="none" stroke="#1f5f9a" stroke-width="1.700"/><rect x="9" y="8.500" width="2" height="6.500" fill="#1f5f9a"/><circle cx="10" cy="5.800" r="1.300" fill="#1f5f9a"/></svg>
<svg class="b" style="left:1841px;top:998px;" width="32" height="20" viewBox="0 0 32 20"><rect x="1.0" y="4" width="1.300" height="3" fill="#f4f8fc"/><rect x="4.3" y="2" width="1.300" height="6" fill="#f4f8fc"/><rect x="7.6" y="0" width="1.300" height="9" fill="#f4f8fc"/><rect x="10.9" y="2" width="1.300" height="6" fill="#f4f8fc"/><rect x="14.2" y="4" width="1.300" height="3" fill="#f4f8fc"/><rect x="17.5" y="2" width="1.300" height="6" fill="#f4f8fc"/><rect x="20.8" y="0" width="1.300" height="9" fill="#f4f8fc"/><rect x="24.1" y="2" width="1.300" height="6" fill="#f4f8fc"/><rect x="27.4" y="4" width="1.300" height="3" fill="#f4f8fc"/></svg>
<span class="t" style="left:1844.00px;top:1007.00px;font-size:8px;line-height:10px;color:#f4f8fc;letter-spacing:1.386px;font-weight:bold;">cisco</span>
<div class="b" style="left:0px;top:1030px;width:1920px;height:50px;background:#0b0d11;"></div>
<svg class="b" style="left:20px;top:1045px;" width="20" height="20" viewBox="0 0 20 20"><path d="M0,2.800 L8.200,1.700 V9.500 H0 Z M9.200,1.500 L20,0 V9.500 H9.200 Z M0,10.500 H8.200 V18.300 L0,17.200 Z M9.200,10.500 H20 V20 L9.200,18.500 Z" fill="#fff"/></svg>
<div class="b" style="left:60px;top:1030px;width:430px;height:50px;background:#f2f2f2;"></div>
<svg class="b" style="left:71px;top:1042px;" width="27" height="27" viewBox="0 0 27 27"><circle cx="13.500" cy="13.500" r="10.500" fill="none" stroke="#111" stroke-width="3.200"/></svg>
<span class="t" style="left:110.00px;top:1044.50px;font-size:18px;line-height:22px;color:#3a3a3a;letter-spacing:-0.394px;">Type here to search</span>
<svg class="b" style="left:456px;top:1043px;" width="16" height="24" viewBox="0 0 16 24"><rect x="4.500" y="1" width="7" height="14" rx="3.500" fill="none" stroke="#333" stroke-width="1.500"/><rect x="6.500" y="3" width="3" height="8" rx="1.500" fill="#333"/><path d="M2,11 v1.500 a6,6 0 0 0 12,0 V11 M8,18.500 V22 M4.500,22.500 h7" fill="none" stroke="#333" stroke-width="1.500"/></svg>
<svg class="b" style="left:507px;top:1044px;" width="26" height="22" viewBox="0 0 26 22"><rect x="5.500" y="3.500" width="15" height="15" fill="none" stroke="#fff" stroke-width="1.500"/><path d="M3,5.500 H1 V16.500 H3 M23,5.500 H25 V16.500 H23" fill="none" stroke="#fff" stroke-width="1.500"/></svg>
<svg class="b" style="left:570px;top:1041px;" width="28" height="28" viewBox="0 0 28 28"><circle cx="14" cy="14" r="13.500" fill="#db4437"/><path d="M14,14 L2.300,20.750 A13.500,13.500 0 0 0 14,27.500 L20.750,15.800 Z" fill="#0f9d58"/><path d="M14,14 L2.300,20.750 A13.500,13.500 0 0 1 2.300,7.250 Z" fill="#0f9d58"/><path d="M14,14 L25.700,7.250 A13.500,13.500 0 0 1 14,27.500 Z" fill="#ffcd40"/><path d="M14,14 L25.700,7.250 H14 Z" fill="#ffcd40"/><circle cx="14" cy="14" r="6.300" fill="#f1f1f1"/><circle cx="14" cy="14" r="5" fill="#4285f4"/></svg>
<div class="b" style="left:559px;top:1077px;width:51px;height:3px;background:#9a9a9a;"></div>
<svg class="b" style="left:633px;top:1041px;" width="28" height="28" viewBox="0 0 28 28"><path d="M2,13 C3,5 9,1 15,1 C23,1 27,7 27,14 V17 H10 C10,21 14,23 18,23 C21,23 24,22 26,21 V26 C23,27.500 20,28 17,28 C9,28 4,23 4,16 C4,12 6,9 9,7 C5,8 3,10 2,13 Z M10,12 H20 C20,9 18,7 15,7 C12,7 10.500,9 10,12 Z" fill="#1e80d8" fill-rule="evenodd"/></svg>
<div class="b" style="left:678px;top:1030px;width:61px;height:50px;background:#3a3b3d;"></div>
<svg class="b" style="left:694px;top:1042px;" width="30" height="26" viewBox="0 0 30 26"><path d="M1,3 h10 l2,2 h16 v19 H1 Z" fill="#f6cf59"/><rect x="1" y="8" width="28" height="16" fill="#fbe08a"/><rect x="3" y="2" width="7" height="2.500" fill="#48a7e8"/><path d="M7,24 v-8 h16 v8 h-3.500 v-4.500 h-9 v4.500 Z" fill="#3b9be6"/></svg>
<div class="b" style="left:678px;top:1077px;width:61px;height:3px;background:#a8a8a8;"></div>
<svg class="b" style="left:755px;top:1040px;" width="30" height="30" viewBox="0 0 30 30"><path d="M10,8 V5.500 a5,4.500 0 0 1 10,0 V8" fill="none" stroke="#fff" stroke-width="1.500"/><rect x="0.500" y="8" width="29" height="21" fill="#fff"/><rect x="8" y="12" width="6" height="6" fill="#f25022"/><rect x="15.500" y="12" width="6" height="6" fill="#7fba00"/><rect x="8" y="19.500" width="6" height="6" fill="#00a4ef"/><rect x="15.500" y="19.500" width="6" height="6" fill="#ffb900"/></svg>
<svg class="b" style="left:817px;top:1042px;" width="30" height="24" viewBox="0 0 30 24"><path d="M0,10 L15,0 L30,10 V24 H0 Z" fill="#fff"/><path d="M17,13 L30,10 L23,21 L21,16 Z" fill="#0b0d11"/><path d="M0,10 L15,2 L30,10" fill="none" stroke="#fff"/></svg>
<svg class="b" style="left:881px;top:1042px;" width="26" height="26" viewBox="0 0 26 26"><circle cx="13" cy="13" r="12" fill="#2a8be0" stroke="#d8e6f4" stroke-width="1.500"/><path d="M7,18 L15,11" stroke="#fff" stroke-width="3"/><circle cx="17" cy="9.500" r="3.800" fill="#fff"/><circle cx="18.600" cy="7.800" r="2" fill="#2a8be0"/></svg>
<svg class="b" style="left:942px;top:1041px;" width="28" height="28" viewBox="0 0 28 28"><circle cx="14" cy="14" r="13.500" fill="#1ed760"/><path d="M6,10 Q14,7 22.500,11" fill="none" stroke="#0b0d11" stroke-width="2.800" stroke-linecap="round"/><path d="M7,14.500 Q14,12 21,15.500" fill="none" stroke="#0b0d11" stroke-width="2.300" stroke-linecap="round"/><path d="M8,18.500 Q14,16.500 19.500,19.500" fill="none" stroke="#0b0d11" stroke-width="1.900" stroke-linecap="round"/></svg>
<div class="b" style="left:931px;top:1077px;width:51px;height:3px;background:#9a9a9a;"></div>
<svg class="b" style="left:1006px;top:1043px;" width="24" height="24" viewBox="0 0 24 24"><path d="M5,2 Q12,-1 19,2 Q24,4 23,12 Q23,20 17,22.500 Q10,25 4,21 Q-1,17 1,9 Q2,4 5,2 Z" fill="#fff"/><path d="M9.500,6 L8,18 M15.500,6 L14,18 M5.500,9.500 L18.500,9.500 M5,15 L18,15" stroke="#1c1c1c" stroke-width="2.300"/></svg>
<div class="b" style="left:993px;top:1077px;width:51px;height:3px;background:#9a9a9a;"></div>
<svg class="b" style="left:1066px;top:1041px;" width="28" height="28" viewBox="0 0 28 28"><circle cx="14" cy="14" r="13" fill="#cfd4da"/><circle cx="11" cy="10" r="7" fill="#f2f4f6" opacity=".8"/><path d="M1,13 Q8,1 20,5" fill="none" stroke="#3f9a3a" stroke-width="3.200"/><path d="M10,7 q9,5 5,19" fill="none" stroke="#2a5aa8" stroke-width="3"/><path d="M17,13 q5,4 9,3" fill="none" stroke="#2a5aa8" stroke-width="2.500"/></svg>
<div class="b" style="left:1055px;top:1077px;width:51px;height:3px;background:#9a9a9a;"></div>
<svg class="b" style="left:1527px;top:1045px;" width="22" height="22" viewBox="0 0 22 22"><circle cx="14" cy="5" r="3" fill="none" stroke="#fff" stroke-width="1.400"/><path d="M9,14 a5,5 0 0 1 10,0" fill="none" stroke="#fff" stroke-width="1.400"/><circle cx="6.500" cy="10.500" r="2.800" fill="none" stroke="#fff" stroke-width="1.400"/><path d="M1.500,20 a5,5 0 0 1 10,0" fill="none" stroke="#fff" stroke-width="1.400"/></svg>
<svg class="b" style="left:1573px;top:1049px;" width="18" height="11" viewBox="0 0 18 11"><path d="M1.500,9.500 L9,2 L16.500,9.500" fill="none" stroke="#fff" stroke-width="1.400"/></svg>
<svg class="b" style="left:1602px;top:1047px;" width="20" height="18" viewBox="0 0 20 18"><path d="M5,0.500 L10,3.500 L5,6.500 L0.500,3.500 Z M15,0.500 L19.500,3.500 L15,6.500 L10,3.500 Z M5,6.500 L10,9.500 L5,12.500 L0.500,9.500 Z M15,6.500 L19.500,9.500 L15,12.500 L10,9.500 Z M10,10.500 L14.300,13.200 L10,16 L5.700,13.200 Z" fill="#fff"/></svg>
<svg class="b" style="left:1631px;top:1047px;" width="22" height="18" viewBox="0 0 22 18"><rect x="4.500" y="5.500" width="15" height="9" fill="none" stroke="#fff" stroke-width="1.300"/><rect x="6.500" y="7.500" width="11" height="5" fill="#fff"/><rect x="19.500" y="8" width="2" height="4" fill="#fff"/><path d="M2,1 v3 M5,1 v3 M1,4 h5 v2 a2.500,2.500 0 0 1 -5,0 Z" stroke="#fff" stroke-width="1" fill="#0b0d11"/></svg>
<svg class="b" style="left:1661px;top:1046px;" width="22" height="20" viewBox="0 0 22 20"><rect x="3.500" y="1.500" width="17" height="11.500" fill="none" stroke="#fff" stroke-width="1.300"/><path d="M12,13 v4 M7,17.500 h10" stroke="#fff" stroke-width="1.300"/><rect x="1" y="1" width="3" height="5" fill="#0b0d11" stroke="#fff" stroke-width="1"/></svg>
<svg class="b" style="left:1691px;top:1046px;" width="22" height="20" viewBox="0 0 22 20"><path d="M1.500,7 h3.500 l4.500,-4.500 v15 l-4.500,-4.500 h-3.500 Z" fill="none" stroke="#fff" stroke-width="1.300"/><path d="M12,7.500 q1.500,2.500 0,5" fill="none" stroke="#fff" stroke-width="1.200"/><path d="M14.500,5.500 q3,4.500 0,9" fill="none" stroke="#bbb" stroke-width="1.100"/><path d="M17,3.500 q4.500,6.500 0,13" fill="none" stroke="#777" stroke-width="1"/></svg>
<span class="t" style="left:1725.00px;top:1046.50px;font-size:15px;line-height:18px;color:#fff;letter-spacing:-1.753px;">ENG</span>
<span class="t" style="left:1790.00px;top:1034.50px;font-size:15px;line-height:18px;color:#fff;letter-spacing:-0.634px;">21:52</span>
<span class="t" style="left:1769.50px;top:1057.50px;font-size:15px;line-height:18px;color:#fff;letter-spacing:0.103px;">01/01/2018</span>
<svg class="b" style="left:1868px;top:1044px;" width="32" height="32" viewBox="0 0 32 32"><path d="M1.500,1.500 h19 v14 h-5 l-4,4 v-4 h-10 Z" fill="#fff"/><path d="M5,5.500 h12 M5,8.500 h12 M5,11.500 h9" stroke="#0b0d11" stroke-width="1"/><circle cx="20.500" cy="21" r="9.500" fill="#26282c" stroke="#5a5c60"/></svg>
<span class="t" style="left:1885.38px;top:1057.50px;font-size:13px;line-height:16px;color:#fff;font-weight:bold;">1</span>
<div class="b" style="left:1914px;top:1030px;width:1px;height:50px;background:#444;"></div>
</body></html>
